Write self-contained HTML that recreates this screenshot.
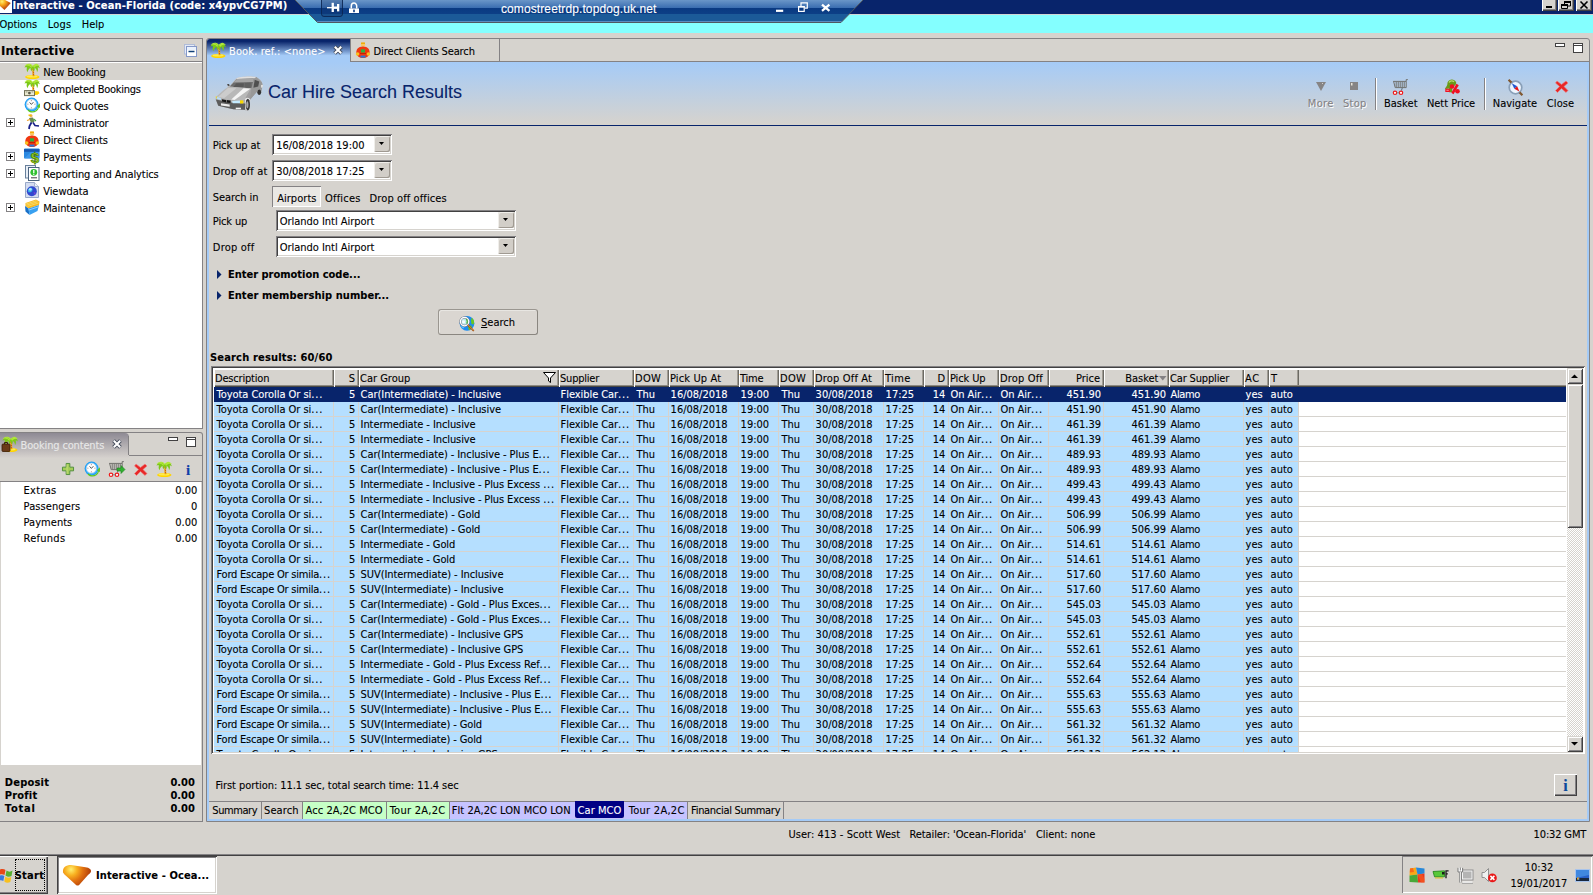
<!DOCTYPE html>
<html><head><meta charset="utf-8"><title>Interactive - Ocean-Florida</title>
<style>
html,body{margin:0;padding:0}
body{width:1593px;height:895px;overflow:hidden;background:#d6d3ce;position:relative;font:11px/14px "DejaVu Sans Condensed","Liberation Sans",sans-serif;color:#000;-webkit-text-stroke:0.1px}
.a{position:absolute;white-space:nowrap;box-sizing:border-box}
svg.a{overflow:visible}
</style></head><body>
<div class="a" style="left:0px;top:0px;width:1593px;height:14px;background:#08246b;"></div>
<svg class="a" style="left:0px;top:0px" width="12" height="13"><defs><radialGradient id="gB" cx="2" cy="1.5" r="10" gradientUnits="userSpaceOnUse"><stop offset="0" stop-color="#fff070"/><stop offset="0.35" stop-color="#f8a818"/><stop offset="0.7" stop-color="#c85810"/><stop offset="1" stop-color="#b04008"/></radialGradient></defs><rect x="0" y="0" width="12" height="13" fill="#fff"/><path d="M0 0 H5 L10.8 3 L4.5 9.9 L0 6z" fill="url(#gB)"/></svg>
<div class="a" style="left:12.5px;top:-1.5px;line-height:14px;height:14px;font-weight:bold;letter-spacing:0.138px;color:#fff;">Interactive - Ocean-Florida (code: x4ypvCG7PM)</div>
<div class="a" style="left:1542px;top:-2px;width:15px;height:13px;background:#d6d3ce;box-shadow:inset 1px 1px 0 #fff,inset -1px -1px 0 #424142,inset -2px -2px 0 #848284;"></div>
<div class="a" style="left:1558px;top:-2px;width:16px;height:13px;background:#d6d3ce;box-shadow:inset 1px 1px 0 #fff,inset -1px -1px 0 #424142,inset -2px -2px 0 #848284;"></div>
<div class="a" style="left:1576px;top:-2px;width:16px;height:13px;background:#d6d3ce;box-shadow:inset 1px 1px 0 #fff,inset -1px -1px 0 #424142,inset -2px -2px 0 #848284;"></div>
<svg class="a" style="left:1546px;top:6px" width="7" height="3"><rect x="0" y="0" width="6" height="2" fill="#000"/></svg><svg class="a" style="left:1561px;top:0px" width="10" height="10"><path d="M3.5 1.5h6v4.5h-6z M0.5 4.5h6v4h-6z" fill="none" stroke="#000" stroke-width="1"/><path d="M3 1h7v2h-7z M0 4h7v2h-7z" fill="#000"/><rect x="1" y="6" width="5" height="2" fill="#d6d3ce"/></svg><svg class="a" style="left:1580px;top:1px" width="9" height="8"><path d="M0.5 0.5 L7.5 7.5 M7.5 0.5 L0.5 7.5" stroke="#000" stroke-width="1.6"/></svg>
<div class="a" style="left:0px;top:14px;width:1593px;height:19px;background:#84ffff;"></div>
<div class="a" style="left:0px;top:14px;width:1593px;height:1px;background:#d0d8d4;"></div>
<div class="a" style="left:-0.5px;top:18px;line-height:14px;height:14px;letter-spacing:-0.098px;">Options</div>
<div class="a" style="left:47.8px;top:18px;line-height:14px;height:14px;letter-spacing:0.147px;">Logs</div>
<div class="a" style="left:81.7px;top:18px;line-height:14px;height:14px;letter-spacing:0.030px;">Help</div>
<svg class="a" style="left:295px;top:0px" width="568" height="23"><defs><linearGradient id="gR" x1="0" y1="0" x2="0" y2="22" gradientUnits="userSpaceOnUse"><stop offset="0" stop-color="#6a96c8"/><stop offset="0.36" stop-color="#3a6db0"/><stop offset="0.37" stop-color="#0a3a82"/><stop offset="0.63" stop-color="#0c3f86"/><stop offset="0.65" stop-color="#1b5a98"/><stop offset="0.95" stop-color="#1b5a98"/><stop offset="0.96" stop-color="#5a8ac0"/><stop offset="1" stop-color="#5a8ac0"/></linearGradient></defs><path d="M0 0 H568 L546 22.5 H22.5z" fill="url(#gR)"/><path d="M0 0 L22.5 22.5 H546 L568 0" fill="none" stroke="#505860" stroke-width="1"/><path d="M26.5 -1 V14 a2.5 2.5 0 0 0 2.5 2.5 H45 a2.5 2.5 0 0 0 2.5 -2.5 V-1z" fill="#102c60" fill-opacity="0.25" stroke="#0a2450" stroke-opacity="0.85"/><path d="M32 7.7h5.5" stroke="#fff" stroke-width="1.3"/><rect x="36.6" y="2.8" width="2.3" height="9.2" fill="#fff"/><rect x="38" y="6.5" width="4.5" height="2.4" fill="#fff"/><rect x="42" y="4" width="2.3" height="7.4" fill="#fff"/><path d="M56.3 8.5 V6 a2.7 2.9 0 0 1 5.4 0 V8.5" fill="none" stroke="#fff" stroke-width="1.5"/><rect x="54" y="8.4" width="10" height="4.6" fill="#fff"/><rect x="58.2" y="9.6" width="1.6" height="2.6" fill="#0a3a82"/><rect x="481" y="9.7" width="7.2" height="2.2" fill="#fff"/><path d="M506 7 V2.8 h6.3 v5.4 h-2.5" fill="none" stroke="#fff" stroke-width="1.2"/><rect x="503.6" y="6.6" width="5.6" height="4.8" fill="none" stroke="#fff" stroke-width="1.2"/><path d="M503 6.8h6.8" stroke="#fff" stroke-width="1.4"/><path d="M527 4.6 L534.4 10.8 M534.4 4.6 L527 10.8" stroke="#fff" stroke-width="2.3"/></svg>
<div class="a" style="left:501px;top:2px;line-height:14px;height:14px;color:#fff;font-family:Liberation Sans,sans-serif;font-size:12px;letter-spacing:0.1px;">comostreetrdp.topdog.uk.net</div>
<div class="a" style="left:0px;top:38px;width:203px;height:391px;border:1px solid #848284;border-left:none;"></div>
<div class="a" style="left:0px;top:61px;width:202px;height:1px;background:#848284;"></div>
<div class="a" style="left:0px;top:62px;width:202px;height:366px;background:#fff;"></div>
<div class="a" style="left:1.1px;top:43px;line-height:16px;height:16px;font-weight:bold;font-size:13px;letter-spacing:0.104px;">Interactive</div>
<svg class="a" style="left:184px;top:44px" width="13" height="13"><rect x="0.5" y="0.5" width="10" height="9.5" fill="#e4eaf6" stroke="#b0bcd8"/><rect x="2.5" y="2.5" width="10" height="10" fill="#fff" stroke="#8498c8"/><rect x="3" y="3" width="9" height="3" fill="#eaf2fc"/><path d="M4.5 7.5h6" stroke="#104078" stroke-width="1.5"/></svg>
<div class="a" style="left:0px;top:63px;width:202px;height:17px;background:#d6d3ce;"></div>
<div class="a" style="left:43.2px;top:66px;line-height:14px;height:14px;letter-spacing:-0.197px;">New Booking</div>
<svg class="a" style="left:24px;top:63px" width="16" height="16"><ellipse cx="8.3" cy="14" rx="7.2" ry="2.1" fill="#ffd400"/><ellipse cx="8" cy="13.4" rx="5.5" ry="1.1" fill="#ffea50"/><path d="M7.8 4 C8.6 7 8.1 10 8.6 13.2 L10.4 13.2 C10 10 10.4 7 9.6 4z" fill="#f0a818"/><path d="M8.6 6.5l1 .8 M8.8 9l1.1 .9 M8.9 11.3l1.2 .8" stroke="#b84810" stroke-width="0.9"/><path d="M8.5 3.6 C6 0.4 3 0.4 0.4 4.6 C1.5 4 2.5 4 3 4.5 C2.4 6 2.5 7.6 3.6 9.2 C4 7 5 5.6 6.6 5 C6.4 6.6 6.9 7.6 7.5 8.2 L8.6 5 L9.6 8.6 C10.6 7.6 10.9 6.6 10.6 5 C12.1 5.6 13 7 13 9.2 C14.1 7.6 14.3 6 13.6 4.5 C14.6 4.3 15.4 4.8 16 5.6 C15 1.8 12 0 8.5 3.6z" fill="#7cc818"/><path d="M8.5 3.4 C7 1 4.5 0.6 2.5 2 C4.8 1.8 6.5 2.8 7.6 4.4 M9 3.4 C10.5 1.2 12.5 0.8 14.2 2.2 C12.2 2 10.8 3 9.8 4.4" fill="none" stroke="#b0e838" stroke-width="1.1"/></svg>
<div class="a" style="left:43.2px;top:83px;line-height:14px;height:14px;letter-spacing:-0.268px;">Completed Bookings</div>
<svg class="a" style="left:24px;top:80px" width="16" height="16"><g transform="translate(0,-1)"><ellipse cx="8.3" cy="14" rx="7.2" ry="2.1" fill="#ffd400"/><ellipse cx="8" cy="13.4" rx="5.5" ry="1.1" fill="#ffea50"/><path d="M7.8 4 C8.6 7 8.1 10 8.6 13.2 L10.4 13.2 C10 10 10.4 7 9.6 4z" fill="#f0a818"/><path d="M8.6 6.5l1 .8 M8.8 9l1.1 .9 M8.9 11.3l1.2 .8" stroke="#b84810" stroke-width="0.9"/><path d="M8.5 3.6 C6 0.4 3 0.4 0.4 4.6 C1.5 4 2.5 4 3 4.5 C2.4 6 2.5 7.6 3.6 9.2 C4 7 5 5.6 6.6 5 C6.4 6.6 6.9 7.6 7.5 8.2 L8.6 5 L9.6 8.6 C10.6 7.6 10.9 6.6 10.6 5 C12.1 5.6 13 7 13 9.2 C14.1 7.6 14.3 6 13.6 4.5 C14.6 4.3 15.4 4.8 16 5.6 C15 1.8 12 0 8.5 3.6z" fill="#7cc818"/><path d="M8.5 3.4 C7 1 4.5 0.6 2.5 2 C4.8 1.8 6.5 2.8 7.6 4.4 M9 3.4 C10.5 1.2 12.5 0.8 14.2 2.2 C12.2 2 10.8 3 9.8 4.4" fill="none" stroke="#b0e838" stroke-width="1.1"/></g><path d="M10.5 11.5h4.5v1.6h-1v1.5h-4z" fill="#ffd000"/><rect x="0.5" y="10.6" width="10" height="5" fill="#e8e8d0" stroke="#707058" stroke-width="1"/><circle cx="5.4" cy="13.1" r="1.4" fill="#585848"/><path d="M1.8 12h1.6 M7.6 12h1.6" stroke="#888870" stroke-width="0.8"/></svg>
<div class="a" style="left:43.2px;top:100px;line-height:14px;height:14px;letter-spacing:-0.073px;">Quick Quotes</div>
<svg class="a" style="left:24px;top:97px" width="16" height="16"><circle cx="7.6" cy="7.6" r="7" fill="#1c9cf4"/><circle cx="7.6" cy="7.6" r="6" fill="#48b8ff"/><path d="M4.5 12.2 C7.5 15.8 12.5 14.6 14.3 10 L12.8 9.4 L15.9 6.2 L16 11 L15 10.4 C13.5 15.5 7.5 17.5 3.6 13.4z" fill="#5cc81c"/><circle cx="7.4" cy="7.2" r="4.9" fill="#fff" stroke="#c8d0e0" stroke-width="0.5"/><path d="M7.4 3.2v1 M7.4 10.3v1 M3.4 7.2h1 M10.4 7.2h1" stroke="#806050" stroke-width="0.7"/><path d="M5.6 5.4 L7.4 7.4 L9.4 5.2" fill="none" stroke="#404040" stroke-width="0.9"/></svg>
<div class="a" style="left:43.2px;top:117px;line-height:14px;height:14px;letter-spacing:-0.164px;">Administrator</div>
<svg class="a" style="left:24px;top:114px" width="16" height="16"><circle cx="7" cy="1.8" r="1.6" fill="#f0b060"/><path d="M4.5 1.2h3" stroke="#f0c000" stroke-width="1.4"/><path d="M5 4 L9 3.5 L10.5 8 L7 9z" fill="#6a8a50"/><path d="M6 5.5 L3 6.5" stroke="#f0a020" stroke-width="1.2"/><path d="M9.5 5 L12 7" stroke="#40a040" stroke-width="1.2"/><path d="M7.5 8.5 L5.5 12 L5 15" fill="none" stroke="#182088" stroke-width="1.8"/><path d="M9 8.5 L11 11.5 L15 12" fill="none" stroke="#182088" stroke-width="1.6"/></svg>
<svg class="a" style="left:6px;top:118px" width="9" height="9"><rect x="0.5" y="0.5" width="8" height="8" fill="#fff" stroke="#848284"/><path d="M2 4.5h5M4.5 2v5" stroke="#000" stroke-width="1"/></svg>
<div class="a" style="left:43.2px;top:134px;line-height:14px;height:14px;letter-spacing:-0.147px;">Direct Clients</div>
<svg class="a" style="left:24px;top:131px" width="16" height="16"><circle cx="8" cy="2.6" r="2.2" fill="#f8c860"/><path d="M6 1.2h4" stroke="#f0a800" stroke-width="1.4"/><path d="M8 4.6 C13 4.6 15 8 14.6 11 C14.3 14 11.5 16 8 16 C4.5 16 1.7 14 1.4 11 C1 8 3 4.6 8 4.6z" fill="#f03810"/><circle cx="2.6" cy="12" r="1.8" fill="#f8c020"/><circle cx="13.4" cy="12" r="1.8" fill="#f8c020"/><rect x="6" y="7.3" width="4" height="3.2" fill="#30b040"/><rect x="5.5" y="13.6" width="5" height="2" fill="#2878d8"/><path d="M5 11.5h6" stroke="#c82000" stroke-width="1"/></svg>
<div class="a" style="left:43.2px;top:151px;line-height:14px;height:14px;letter-spacing:0.008px;">Payments</div>
<svg class="a" style="left:24px;top:148px" width="16" height="16"><rect x="0" y="0.5" width="15.5" height="10" rx="1" fill="#2a88e0"/><rect x="0" y="1.2" width="15.5" height="2.6" fill="#1858b0"/><path d="M0 10.5 L7 4 L15.5 4 L15.5 10.5z" fill="#4aa0f0" opacity="0.6"/><text x="11" y="14.6" font-size="15" font-weight="bold" text-anchor="middle" fill="#a0d818" stroke="#487808" stroke-width="0.7" font-family="Liberation Sans,sans-serif">$</text></svg>
<svg class="a" style="left:6px;top:152px" width="9" height="9"><rect x="0.5" y="0.5" width="8" height="8" fill="#fff" stroke="#848284"/><path d="M2 4.5h5M4.5 2v5" stroke="#000" stroke-width="1"/></svg>
<div class="a" style="left:43.2px;top:168px;line-height:14px;height:14px;letter-spacing:-0.105px;">Reporting and Analytics</div>
<svg class="a" style="left:24px;top:165px" width="16" height="16"><rect x="1.5" y="0.5" width="10" height="12.5" fill="#e8eef6" stroke="#68809c"/><rect x="4.5" y="2.5" width="10.5" height="13" fill="#fff" stroke="#4c6480"/><circle cx="9.8" cy="7.3" r="3.4" fill="#30c030"/><path d="M9.8 5v3" stroke="#fff" stroke-width="1.3"/><circle cx="9.8" cy="9.2" r="0.7" fill="#fff"/><path d="M7 12.8h6" stroke="#424142" stroke-width="1"/></svg>
<svg class="a" style="left:6px;top:169px" width="9" height="9"><rect x="0.5" y="0.5" width="8" height="8" fill="#fff" stroke="#848284"/><path d="M2 4.5h5M4.5 2v5" stroke="#000" stroke-width="1"/></svg>
<div class="a" style="left:43.2px;top:185px;line-height:14px;height:14px;letter-spacing:-0.046px;">Viewdata</div>
<svg class="a" style="left:24px;top:182px" width="16" height="16"><path d="M1.5 0.5h9l4 4v11h-13z" fill="#d4dcf0" stroke="#98a8c8"/><path d="M10.5 0.5v4h4" fill="#eef2fa" stroke="#98a8c8" stroke-width="0.8"/><circle cx="7.8" cy="9.3" r="5" fill="#3048d0"/><path d="M4 7.5 C6 4.5 9 5.5 8.5 8 C8 10.5 5.5 10.5 4.2 10z" fill="#38b8e8"/><path d="M9.5 10.5 C11 9.8 12.3 10.8 11 13z" fill="#8040d0"/><circle cx="6.3" cy="7.3" r="1.4" fill="#c8f0ff" opacity="0.8"/></svg>
<div class="a" style="left:43.2px;top:202px;line-height:14px;height:14px;letter-spacing:-0.132px;">Maintenance</div>
<svg class="a" style="left:24px;top:199px" width="16" height="16"><path d="M1.5 4 L12 0.5 L15.5 2.5 L15 6 L4.5 9.5 L1.5 7z" fill="#f8b820"/><path d="M2 5 L12.5 1.6 M2.5 6.2 L13.5 2.8 M3.5 7.4 L14.5 4" stroke="#f8e070" stroke-width="0.8"/><path d="M1 7 L4.5 9.5 L5.5 16 L1.5 12.5z" fill="#1870c8"/><path d="M4.5 9.5 L15 6 L13.5 12 L5.5 16z" fill="#38a0f0"/><path d="M5 11 L14.5 7.8" stroke="#90d0ff" stroke-width="1"/></svg>
<svg class="a" style="left:6px;top:203px" width="9" height="9"><rect x="0.5" y="0.5" width="8" height="8" fill="#fff" stroke="#848284"/><path d="M2 4.5h5M4.5 2v5" stroke="#000" stroke-width="1"/></svg>
<div class="a" style="left:0px;top:432px;width:203px;height:390px;border:1px solid #848284;border-left:none;border-top-right-radius:3px;"></div>
<div class="a" style="left:0px;top:433px;width:129px;height:25px;background:linear-gradient(#8e8a94,#d6d2ce);border-top-right-radius:4px;"></div>
<div class="a" style="left:128px;top:436px;width:1px;height:19px;background:#848284;"></div>
<div class="a" style="left:129px;top:455px;width:73px;height:1px;background:#848284;"></div>
<svg class="a" style="left:2px;top:436px" width="16" height="16"><ellipse cx="8.3" cy="14" rx="7.2" ry="2.1" fill="#ffd400"/><ellipse cx="8" cy="13.4" rx="5.5" ry="1.1" fill="#ffea50"/><path d="M7.8 4 C8.6 7 8.1 10 8.6 13.2 L10.4 13.2 C10 10 10.4 7 9.6 4z" fill="#f0a818"/><path d="M8.6 6.5l1 .8 M8.8 9l1.1 .9 M8.9 11.3l1.2 .8" stroke="#b84810" stroke-width="0.9"/><path d="M8.5 3.6 C6 0.4 3 0.4 0.4 4.6 C1.5 4 2.5 4 3 4.5 C2.4 6 2.5 7.6 3.6 9.2 C4 7 5 5.6 6.6 5 C6.4 6.6 6.9 7.6 7.5 8.2 L8.6 5 L9.6 8.6 C10.6 7.6 10.9 6.6 10.6 5 C12.1 5.6 13 7 13 9.2 C14.1 7.6 14.3 6 13.6 4.5 C14.6 4.3 15.4 4.8 16 5.6 C15 1.8 12 0 8.5 3.6z" fill="#7cc818"/><path d="M8.5 3.4 C7 1 4.5 0.6 2.5 2 C4.8 1.8 6.5 2.8 7.6 4.4 M9 3.4 C10.5 1.2 12.5 0.8 14.2 2.2 C12.2 2 10.8 3 9.8 4.4" fill="none" stroke="#b0e838" stroke-width="1.1"/><rect x="0" y="8" width="8" height="7.5" rx="1" fill="#6a3a18" stroke="#3a1c08" stroke-width="0.8"/><path d="M2.5 8V6.5h3V8" fill="none" stroke="#3a1c08" stroke-width="1"/></svg>
<div class="a" style="left:20.6px;top:438.5px;line-height:14px;height:14px;letter-spacing:-0.158px;color:#e8e8e8;">Booking contents</div>
<svg class="a" style="left:112px;top:439px" width="10" height="10"><path d="M1.6 1.6 L8.4 8.4 M8.4 1.6 L1.6 8.4" stroke="#404858" stroke-width="3.8"/><path d="M1.8 1.8 L8.2 8.2 M8.2 1.8 L1.8 8.2" stroke="#fff" stroke-width="2.1"/></svg>
<svg class="a" style="left:168px;top:437px" width="11" height="5"><rect x="0.5" y="0.5" width="9" height="3" fill="#fff" stroke="#424142"/></svg><svg class="a" style="left:186px;top:437px" width="11" height="11"><rect x="0.5" y="0.5" width="9" height="9" fill="#fff" stroke="#424142"/><path d="M0.5 2.5h9" stroke="#424142"/></svg>
<div class="a" style="left:129px;top:456px;width:73px;height:2px;background:#d6d3ce;"></div>
<div class="a" style="left:0px;top:481px;width:202px;height:1px;background:#848284;"></div>
<svg class="a" style="left:62px;top:463px" width="12" height="12" viewBox="0 0 13 13"><path d="M4.5 0.5h4v4h4v4h-4v4h-4v-4h-4v-4h4z" fill="#a4cc58" stroke="#4c8c38" stroke-width="1"/><path d="M5.5 1.5v10" stroke="#c8e080" stroke-width="1"/></svg><svg class="a" style="left:84px;top:461px" width="16" height="16"><circle cx="7.6" cy="7.6" r="7" fill="#1c9cf4"/><circle cx="7.6" cy="7.6" r="6" fill="#48b8ff"/><path d="M4.5 12.2 C7.5 15.8 12.5 14.6 14.3 10 L12.8 9.4 L15.9 6.2 L16 11 L15 10.4 C13.5 15.5 7.5 17.5 3.6 13.4z" fill="#5cc81c"/><circle cx="7.4" cy="7.2" r="4.9" fill="#fff" stroke="#c8d0e0" stroke-width="0.5"/><path d="M7.4 3.2v1 M7.4 10.3v1 M3.4 7.2h1 M10.4 7.2h1" stroke="#806050" stroke-width="0.7"/><path d="M5.6 5.4 L7.4 7.4 L9.4 5.2" fill="none" stroke="#404040" stroke-width="0.9"/></svg><svg class="a" style="left:108px;top:461px" width="17" height="16"><path d="M1.2 2.4h13 M14.2 2.4 V8.6 H3.2 L1.6 2.4 M4.2 3v5 M6.2 3v5 M8.2 3v5 M10.2 3v5 M12.2 3v5 M14.2 2.4 V0.6 h1.6" fill="none" stroke="#70706c" stroke-width="1"/><path d="M10.4 8.6 L9.4 11.6" stroke="#607078"/><circle cx="3" cy="13.8" r="1.7" fill="#fff" stroke="#f01818" stroke-width="1.2"/><circle cx="9" cy="13.8" r="1.7" fill="#fff" stroke="#f01818" stroke-width="1.2"/><path d="M4.7 13.8h2.6" stroke="#848284"/><path d="M9 7h4V4.5l4 4 -4 4V10H9z" fill="#30b030" stroke="#208020" stroke-width="0.6"/></svg><svg class="a" style="left:134px;top:463px" width="14" height="13"><path d="M2 1 L6.5 4.5 L11 1 L13 3 L9 6.5 L13 10.5 L11 12.5 L6.5 8.5 L2.5 12.5 L0.5 10.5 L4.5 6.5 L0.5 3z" fill="#e82828" stroke="#f08080" stroke-width="0.6"/></svg><svg class="a" style="left:156px;top:461px" width="16" height="16"><ellipse cx="8.3" cy="14" rx="7.2" ry="2.1" fill="#ffd400"/><ellipse cx="8" cy="13.4" rx="5.5" ry="1.1" fill="#ffea50"/><path d="M7.8 4 C8.6 7 8.1 10 8.6 13.2 L10.4 13.2 C10 10 10.4 7 9.6 4z" fill="#f0a818"/><path d="M8.6 6.5l1 .8 M8.8 9l1.1 .9 M8.9 11.3l1.2 .8" stroke="#b84810" stroke-width="0.9"/><path d="M8.5 3.6 C6 0.4 3 0.4 0.4 4.6 C1.5 4 2.5 4 3 4.5 C2.4 6 2.5 7.6 3.6 9.2 C4 7 5 5.6 6.6 5 C6.4 6.6 6.9 7.6 7.5 8.2 L8.6 5 L9.6 8.6 C10.6 7.6 10.9 6.6 10.6 5 C12.1 5.6 13 7 13 9.2 C14.1 7.6 14.3 6 13.6 4.5 C14.6 4.3 15.4 4.8 16 5.6 C15 1.8 12 0 8.5 3.6z" fill="#7cc818"/><path d="M8.5 3.4 C7 1 4.5 0.6 2.5 2 C4.8 1.8 6.5 2.8 7.6 4.4 M9 3.4 C10.5 1.2 12.5 0.8 14.2 2.2 C12.2 2 10.8 3 9.8 4.4" fill="none" stroke="#b0e838" stroke-width="1.1"/></svg><div class="a" style="left:184px;top:460px;width:8px;line-height:20px;font-family:'Liberation Serif',serif;font-weight:bold;font-size:15px;color:#1040a8;text-align:center">i</div>
<div class="a" style="left:1px;top:482px;width:200px;height:283px;background:#fff;"></div>
<div class="a" style="left:23.6px;top:484px;line-height:14px;height:14px;letter-spacing:0.270px;">Extras</div>
<div class="a" style="left:100px;top:484px;line-height:14px;height:14px;width:97.3px;text-align:right;">0.00</div>
<div class="a" style="left:23.6px;top:500px;line-height:14px;height:14px;letter-spacing:0.089px;">Passengers</div>
<div class="a" style="left:100px;top:500px;line-height:14px;height:14px;width:97.3px;text-align:right;">0</div>
<div class="a" style="left:23.6px;top:516px;line-height:14px;height:14px;letter-spacing:0.033px;">Payments</div>
<div class="a" style="left:100px;top:516px;line-height:14px;height:14px;width:97.3px;text-align:right;">0.00</div>
<div class="a" style="left:23.6px;top:532px;line-height:14px;height:14px;letter-spacing:0.250px;">Refunds</div>
<div class="a" style="left:100px;top:532px;line-height:14px;height:14px;width:97.3px;text-align:right;">0.00</div>
<div class="a" style="left:4.8px;top:776px;line-height:14px;height:14px;font-weight:bold;letter-spacing:0.222px;">Deposit</div>
<div class="a" style="left:100px;top:776px;line-height:14px;height:14px;width:94.8px;text-align:right;font-weight:bold;">0.00</div>
<div class="a" style="left:4.8px;top:789px;line-height:14px;height:14px;font-weight:bold;letter-spacing:0.197px;">Profit</div>
<div class="a" style="left:100px;top:789px;line-height:14px;height:14px;width:94.8px;text-align:right;font-weight:bold;">0.00</div>
<div class="a" style="left:4.8px;top:802px;line-height:14px;height:14px;font-weight:bold;letter-spacing:0.802px;">Total</div>
<div class="a" style="left:100px;top:802px;line-height:14px;height:14px;width:94.8px;text-align:right;font-weight:bold;">0.00</div>
<div class="a" style="left:206px;top:38px;width:1384px;height:784px;border:1px solid #848284;border-radius:3px 3px 0 0;"></div>
<div class="a" style="left:207px;top:61px;width:1382px;height:1px;background:#848284;"></div>
<div class="a" style="left:207px;top:62px;width:1382px;height:759px;background:#a5cbf7;"></div>
<div class="a" style="left:209px;top:62px;width:1378px;height:757px;background:#d6d3ce;"></div>
<div class="a" style="left:209px;top:62px;width:1378px;height:62px;background:linear-gradient(#a5cbf7,#d6d3ce);"></div>
<div class="a" style="left:209px;top:125px;width:1378px;height:1px;background:#08246b;"></div>
<div class="a" style="left:207px;top:39px;width:143px;height:23px;background:linear-gradient(#08246b 0,#08246b 10%,#a5cbf7 72%,#a5cbf7 100%);border-radius:3px 0 0 0;"></div>
<svg class="a" style="left:210px;top:42px" width="16" height="16"><ellipse cx="8.3" cy="14" rx="7.2" ry="2.1" fill="#ffd400"/><ellipse cx="8" cy="13.4" rx="5.5" ry="1.1" fill="#ffea50"/><path d="M7.8 4 C8.6 7 8.1 10 8.6 13.2 L10.4 13.2 C10 10 10.4 7 9.6 4z" fill="#f0a818"/><path d="M8.6 6.5l1 .8 M8.8 9l1.1 .9 M8.9 11.3l1.2 .8" stroke="#b84810" stroke-width="0.9"/><path d="M8.5 3.6 C6 0.4 3 0.4 0.4 4.6 C1.5 4 2.5 4 3 4.5 C2.4 6 2.5 7.6 3.6 9.2 C4 7 5 5.6 6.6 5 C6.4 6.6 6.9 7.6 7.5 8.2 L8.6 5 L9.6 8.6 C10.6 7.6 10.9 6.6 10.6 5 C12.1 5.6 13 7 13 9.2 C14.1 7.6 14.3 6 13.6 4.5 C14.6 4.3 15.4 4.8 16 5.6 C15 1.8 12 0 8.5 3.6z" fill="#7cc818"/><path d="M8.5 3.4 C7 1 4.5 0.6 2.5 2 C4.8 1.8 6.5 2.8 7.6 4.4 M9 3.4 C10.5 1.2 12.5 0.8 14.2 2.2 C12.2 2 10.8 3 9.8 4.4" fill="none" stroke="#b0e838" stroke-width="1.1"/></svg>
<div class="a" style="left:229px;top:44.5px;line-height:14px;height:14px;letter-spacing:0.127px;color:#fff;">Book. ref.: &lt;none&gt;</div>
<svg class="a" style="left:333px;top:45px" width="10" height="10"><path d="M1.6 1.6 L8.4 8.4 M8.4 1.6 L1.6 8.4" stroke="#404858" stroke-width="3.8"/><path d="M1.8 1.8 L8.2 8.2 M8.2 1.8 L1.8 8.2" stroke="#fff" stroke-width="2.1"/></svg>
<div class="a" style="left:350px;top:39px;width:1px;height:23px;background:#848284;"></div>
<div class="a" style="left:350px;top:39px;width:150px;height:23px;border-right:1px solid #848284;"></div>
<svg class="a" style="left:355px;top:42px" width="16" height="16"><circle cx="8" cy="2.6" r="2.2" fill="#f8c860"/><path d="M6 1.2h4" stroke="#f0a800" stroke-width="1.4"/><path d="M8 4.6 C13 4.6 15 8 14.6 11 C14.3 14 11.5 16 8 16 C4.5 16 1.7 14 1.4 11 C1 8 3 4.6 8 4.6z" fill="#f03810"/><circle cx="2.6" cy="12" r="1.8" fill="#f8c020"/><circle cx="13.4" cy="12" r="1.8" fill="#f8c020"/><rect x="6" y="7.3" width="4" height="3.2" fill="#30b040"/><rect x="5.5" y="13.6" width="5" height="2" fill="#2878d8"/><path d="M5 11.5h6" stroke="#c82000" stroke-width="1"/></svg>
<div class="a" style="left:373.6px;top:44.5px;line-height:14px;height:14px;letter-spacing:-0.118px;">Direct Clients Search</div>
<svg class="a" style="left:1555px;top:43px" width="11" height="5"><rect x="0.5" y="0.5" width="9" height="3" fill="#fff" stroke="#424142"/></svg><svg class="a" style="left:1573px;top:43px" width="11" height="11"><rect x="0.5" y="0.5" width="9" height="9" fill="#fff" stroke="#424142"/><path d="M0.5 2.5h9" stroke="#424142"/></svg>
<svg class="a" style="left:208px;top:64px" width="64" height="54" viewBox="0 0 1061 895"><defs><linearGradient id="gC" x1="0" y1="0" x2="1" y2="1"><stop offset="0" stop-color="#d0d0d0"/><stop offset="1" stop-color="#848284"/></linearGradient><filter id="bl"><feGaussianBlur stdDeviation="6"/></filter></defs><g filter="url(#bl)"><path d="M470,235 C520,210 700,195 800,215 C850,240 890,280 895,310 L905,350 L885,375 L880,480 L830,505 L810,460 L700,590 L690,700 L650,775 L600,760 L420,750 L170,690 L130,600 L125,580 L140,540 L250,440 L330,380 L320,340 L345,335 L360,365 Z" fill="url(#gC)"/><path d="M760,240 L800,215 L895,310 L905,350 L880,480 L830,505 L810,460 L700,590 L720,400 Z" fill="#989898"/><path d="M470,235 C520,210 700,195 800,215 L760,240 L480,250 Z" fill="#e0e0e0"/><path d="M360,372 L480,250 L760,240 L720,400 L600,392 Z" fill="#6c6c6c"/><path d="M480,250 L760,240 L748,300 L425,308 Z" fill="#a6a6a6"/><path d="M470,320 L595,318 L590,392 L420,380 Z" fill="#585858"/><path d="M610,315 L710,312 L705,398 L605,392 Z" fill="#606060"/><path d="M775,262 L850,292 L832,372 L752,392 Z" fill="#505050"/><path d="M360,375 L600,395 L720,405 L690,440 L600,600 L400,600 L230,580 L140,545 Z" fill="#b8b8b8"/><path d="M330,398 L470,402 L270,565 L165,548 Z" fill="#cccccc"/><path d="M590,402 L700,410 L440,595 L385,588 Z" fill="#f4f4f4"/><path d="M140,545 L230,580 L400,600 L600,600 L612,655 L400,642 L230,612 L130,590 Z" fill="#b4b4b4"/><path d="M130,590 L230,610 L400,642 L612,655 L620,760 L420,750 L170,690 Z" fill="#5c5c5c"/><ellipse cx="850" cy="468" rx="30" ry="44" fill="#303030"/><path d="M610,580 C650,540 700,560 700,600 L690,700 L650,775 L620,760 Z" fill="#e8e8e8"/><ellipse cx="660" cy="672" rx="36" ry="98" fill="#383838"/><ellipse cx="652" cy="675" rx="18" ry="58" fill="#a8a8a8"/><path d="M228,585 L300,597 L300,637 L235,622 Z M310,598 L378,606 L372,647 L312,638 Z" fill="#161616"/><path d="M400,612 L530,606 L530,652 L410,652 Z" fill="#c4eaff"/><rect x="530" y="603" width="56" height="52" fill="#f8d800"/><path d="M140,540 L215,566 L215,596 L142,576 Z" fill="#b4dcf8"/><path d="M128,533 L150,540 L150,572 L130,566 Z" fill="#e8d040"/><path d="M215,650 L360,672 L360,710 L215,686 Z" fill="#ececec"/><rect x="460" y="724" width="86" height="26" fill="#f4f4f4"/><path d="M315,335 L350,330 L357,366 L330,362 Z" fill="#424142"/><path d="M880,350 L912,345 L906,386 L880,392 Z" fill="#e4e4e4"/></g></svg>
<div class="a" style="left:268px;top:81px;line-height:22px;height:22px;color:#08246b;font-family:Liberation Sans,sans-serif;font-size:18px;">Car Hire Search Results</div>
<svg class="a" style="left:1316px;top:82px" width="10" height="9"><path d="M0 0h10l-5 9z" fill="#868484"/><rect x="6" y="1" width="1" height="1" fill="#d8d4d0"/></svg><svg class="a" style="left:1350px;top:82px" width="8" height="8"><rect x="0" y="0" width="8" height="8" fill="#868484"/><rect x="1" y="1" width="1.5" height="2.5" fill="#e8e4d8"/></svg><div class="a" style="left:1375px;top:78px;width:2px;height:32px;border-left:1px solid #848284;border-right:1px solid #fff"></div><svg class="a" style="left:1392px;top:79px" width="17" height="16"><path d="M1.2 2.4h13 M14.2 2.4 V8.6 H3.2 L1.6 2.4 M4.2 3v5 M6.2 3v5 M8.2 3v5 M10.2 3v5 M12.2 3v5 M14.2 2.4 V0.6 h1.6" fill="none" stroke="#70706c" stroke-width="1"/><path d="M10.4 8.6 L9.4 11.6" stroke="#607078"/><circle cx="3" cy="13.8" r="1.7" fill="#fff" stroke="#f01818" stroke-width="1.2"/><circle cx="9" cy="13.8" r="1.7" fill="#fff" stroke="#f01818" stroke-width="1.2"/><path d="M4.7 13.8h2.6" stroke="#848284"/></svg><svg class="a" style="left:1444px;top:79px" width="17" height="16"><path d="M3.5 3.5 C5 -0.5 10.5 -0.5 12 3 C12.8 5 11 7 8.5 8 L8 13 L5.5 13.5 L5 9.5 L1 10 C1.5 8 3.5 7.5 3.5 3.5z" fill="#6a9a18"/><path d="M5 3.5 C6 1.5 9 1.3 10 3" fill="none" stroke="#b8d870" stroke-width="1.2"/><circle cx="8" cy="7.5" r="2.3" fill="#f01020"/><circle cx="13.5" cy="12.3" r="2.3" fill="#f01020"/><path d="M13.6 5.5 L8.4 14.5" stroke="#f01020" stroke-width="2.6"/><rect x="1.3" y="9.7" width="4.6" height="3.3" fill="#f01020"/><path d="M2.4 11.3h2.4" stroke="#f8a0a0" stroke-width="0.9"/></svg><div class="a" style="left:1484px;top:78px;width:2px;height:32px;border-left:1px solid #848284;border-right:1px solid #fff"></div><svg class="a" style="left:1507px;top:79px" width="17" height="17"><circle cx="8.5" cy="8.5" r="6.3" fill="#eef6ff" stroke="#8aa0b8" stroke-width="1.7"/><path d="M4.8 4.2 L10.2 7.3 L7.3 9.7z" fill="#2058d0"/><path d="M12.4 12.6 L7.3 9.7 L10.2 7.3z" fill="#e81818"/><path d="M1.6 0.8 L4.4 3.6 M15.4 16.2 L12.6 13.4" stroke="#805830" stroke-width="2.2"/></svg><svg class="a" style="left:1555px;top:80px" width="14" height="13"><path d="M2 1 L6.5 4.5 L11 1 L13 3 L9 6.5 L13 10.5 L11 12.5 L6.5 8.5 L2.5 12.5 L0.5 10.5 L4.5 6.5 L0.5 3z" fill="#e82828" stroke="#f08080" stroke-width="0.6"/></svg>
<div class="a" style="left:1307.8px;top:97px;line-height:14px;height:14px;letter-spacing:0.346px;color:#848284;text-shadow:1px 1px 0 #fff;">More</div>
<div class="a" style="left:1343px;top:97px;line-height:14px;height:14px;letter-spacing:0.300px;color:#848284;text-shadow:1px 1px 0 #fff;">Stop</div>
<div class="a" style="left:1383.9px;top:97px;line-height:14px;height:14px;letter-spacing:0.062px;">Basket</div>
<div class="a" style="left:1426.9px;top:97px;line-height:14px;height:14px;letter-spacing:-0.022px;">Nett Price</div>
<div class="a" style="left:1492.8px;top:97px;line-height:14px;height:14px;letter-spacing:0.001px;">Navigate</div>
<div class="a" style="left:1546.8px;top:97px;line-height:14px;height:14px;letter-spacing:0.086px;">Close</div>
<div class="a" style="left:212.8px;top:139px;line-height:14px;height:14px;letter-spacing:-0.084px;">Pick up at</div>
<div class="a" style="left:212.8px;top:165px;line-height:14px;height:14px;letter-spacing:0.155px;">Drop off at</div>
<div class="a" style="left:212.8px;top:191px;line-height:14px;height:14px;letter-spacing:-0.051px;">Search in</div>
<div class="a" style="left:212.8px;top:215px;line-height:14px;height:14px;letter-spacing:-0.123px;">Pick up</div>
<div class="a" style="left:212.8px;top:241px;line-height:14px;height:14px;letter-spacing:0.213px;">Drop off</div>
<div class="a" style="left:272px;top:134px;width:120px;height:21px;background:#fff;box-shadow:inset 1px 1px 0 #848284,inset -1px -1px 0 #fff,inset 2px 2px 0 #424142,inset -2px -2px 0 #d6d3ce;"></div>
<div class="a" style="left:276.2px;top:139px;line-height:14px;height:14px;letter-spacing:-0.024px;">16/08/2018 19:00</div>
<div class="a" style="left:374px;top:136px;width:16px;height:16px;background:#d2cec8;border-radius:2px;box-shadow:inset 1px 1px 0 #f0eeea,inset -1px -1px 0 #a09a92;"></div>
<svg class="a" style="left:379px;top:142px" width="5" height="3"><path d="M0 0h5l-2.5 3z" fill="#000"/></svg>
<div class="a" style="left:272px;top:160px;width:120px;height:21px;background:#fff;box-shadow:inset 1px 1px 0 #848284,inset -1px -1px 0 #fff,inset 2px 2px 0 #424142,inset -2px -2px 0 #d6d3ce;"></div>
<div class="a" style="left:276.2px;top:165px;line-height:14px;height:14px;letter-spacing:-0.024px;">30/08/2018 17:25</div>
<div class="a" style="left:374px;top:162px;width:16px;height:16px;background:#d2cec8;border-radius:2px;box-shadow:inset 1px 1px 0 #f0eeea,inset -1px -1px 0 #a09a92;"></div>
<svg class="a" style="left:379px;top:168px" width="5" height="3"><path d="M0 0h5l-2.5 3z" fill="#000"/></svg>
<div class="a" style="left:272px;top:186px;width:49px;height:21px;background:#eae8e4;box-shadow:inset 1px 1px 0 #848284,inset -1px -1px 0 #fff;"></div>
<div class="a" style="left:277.2px;top:192px;line-height:14px;height:14px;letter-spacing:0.034px;">Airports</div>
<div class="a" style="left:325px;top:192px;line-height:14px;height:14px;letter-spacing:0.191px;">Offices</div>
<div class="a" style="left:369.6px;top:192px;line-height:14px;height:14px;letter-spacing:0.103px;">Drop off offices</div>
<div class="a" style="left:276px;top:210px;width:240px;height:21px;background:#fff;box-shadow:inset 1px 1px 0 #848284,inset -1px -1px 0 #fff,inset 2px 2px 0 #424142,inset -2px -2px 0 #d6d3ce;"></div>
<div class="a" style="left:279.8px;top:215px;line-height:14px;height:14px;letter-spacing:-0.033px;">Orlando Intl Airport</div>
<div class="a" style="left:498px;top:212px;width:16px;height:16px;background:#d2cec8;border-radius:2px;box-shadow:inset 1px 1px 0 #f0eeea,inset -1px -1px 0 #a09a92;"></div>
<svg class="a" style="left:503px;top:218px" width="5" height="3"><path d="M0 0h5l-2.5 3z" fill="#000"/></svg>
<div class="a" style="left:276px;top:236px;width:240px;height:21px;background:#fff;box-shadow:inset 1px 1px 0 #848284,inset -1px -1px 0 #fff,inset 2px 2px 0 #424142,inset -2px -2px 0 #d6d3ce;"></div>
<div class="a" style="left:279.8px;top:241px;line-height:14px;height:14px;letter-spacing:-0.033px;">Orlando Intl Airport</div>
<div class="a" style="left:498px;top:238px;width:16px;height:16px;background:#d2cec8;border-radius:2px;box-shadow:inset 1px 1px 0 #f0eeea,inset -1px -1px 0 #a09a92;"></div>
<svg class="a" style="left:503px;top:244px" width="5" height="3"><path d="M0 0h5l-2.5 3z" fill="#000"/></svg>
<svg class="a" style="left:217px;top:269.5px" width="5" height="9"><path d="M0 0l4.5 4.5L0 9z" fill="#08246b"/></svg>
<div class="a" style="left:227.9px;top:268px;line-height:14px;height:14px;font-weight:bold;letter-spacing:-0.005px;">Enter promotion code...</div>
<svg class="a" style="left:217px;top:290.5px" width="5" height="9"><path d="M0 0l4.5 4.5L0 9z" fill="#08246b"/></svg>
<div class="a" style="left:227.9px;top:289px;line-height:14px;height:14px;font-weight:bold;letter-spacing:0.078px;">Enter membership number...</div>
<div class="a" style="left:438px;top:309px;width:100px;height:26px;background:#dad6d1;border-radius:3px;border:1px solid #9a9690;border-bottom-color:#8a8680;border-right-color:#8a8680;box-shadow:inset 1px 1px 0 #e8e6e2;"></div>
<svg class="a" style="left:459px;top:315px" width="17" height="17"><circle cx="8" cy="8.3" r="7.4" fill="#1c8cf0"/><path d="M12.5 2.8 C15 4 15.6 7 14.6 9.5 L12.5 9 L12 6z M9 11 L12.5 10.5 L13 13.5 L10 15.3z" fill="#68c820"/><path d="M2 5 C1 8 1.5 11.5 4 13.8 L5.5 12z" fill="#58c0ff"/><circle cx="5.6" cy="6.6" r="4.2" fill="#bfeaf0" stroke="#707888" stroke-width="2.2"/><circle cx="5.6" cy="6.6" r="4.2" fill="none" stroke="#fff" stroke-width="1.3"/><circle cx="4.6" cy="6.8" r="1.6" fill="#fff" opacity="0.85"/><path d="M7 4.2 C8.5 5 8.6 7.5 7.6 8.6" fill="none" stroke="#48b028" stroke-width="1.2"/><path d="M8.8 9.9 L14.8 16" stroke="#a05010" stroke-width="1.7"/><path d="M8.6 9.5 L14.4 15.6" stroke="#e8a060" stroke-width="0.6"/></svg>
<div class="a" style="left:481px;top:316px;line-height:14px;height:14px;"><u>S</u>earch</div>
<div class="a" style="left:210px;top:351px;line-height:14px;height:14px;font-weight:bold;letter-spacing:0.173px;">Search results: 60/60</div>
<div class="a" style="left:211px;top:366px;width:1374px;height:388px;background:#fff;box-shadow:inset 1px 1px 0 #848284,inset -1px -1px 0 #fff,inset 2px 2px 0 #424142,inset -2px 0 0 #fff,inset 0 -2px 0 #d6d3ce;"></div>
<div class="a" style="left:214px;top:368px;width:1352px;height:19px;background:#d6d3ce;box-shadow:inset 0 2px 0 #fff,inset 0 -1px 0 #484844,inset 0 -2px 0 #8c8880;"></div>
<div class="a" style="left:214px;top:368px;width:120px;height:19px;box-shadow:inset 0 2px 0 #fff,inset 1px 0 0 #fff,inset 0 -1px 0 #484844,inset 0 -2px 0 #8c8880,inset -1px 0 0 #6c6a64,inset -2px 0 0 #a09c94;"></div>
<div class="a" style="left:215px;top:372px;line-height:14px;height:14px;letter-spacing:-0.189px;">Description</div>
<div class="a" style="left:334px;top:368px;width:25px;height:19px;box-shadow:inset 0 2px 0 #fff,inset 1px 0 0 #fff,inset 0 -1px 0 #484844,inset 0 -2px 0 #8c8880,inset -1px 0 0 #6c6a64,inset -2px 0 0 #a09c94;"></div>
<div class="a" style="left:334px;top:372px;line-height:14px;height:14px;width:21px;text-align:right;">S</div>
<div class="a" style="left:359px;top:368px;width:200px;height:19px;box-shadow:inset 0 2px 0 #fff,inset 1px 0 0 #fff,inset 0 -1px 0 #484844,inset 0 -2px 0 #8c8880,inset -1px 0 0 #6c6a64,inset -2px 0 0 #a09c94;"></div>
<div class="a" style="left:360px;top:372px;line-height:14px;height:14px;letter-spacing:0.000px;">Car Group</div>
<div class="a" style="left:559px;top:368px;width:75px;height:19px;box-shadow:inset 0 2px 0 #fff,inset 1px 0 0 #fff,inset 0 -1px 0 #484844,inset 0 -2px 0 #8c8880,inset -1px 0 0 #6c6a64,inset -2px 0 0 #a09c94;"></div>
<div class="a" style="left:560px;top:372px;line-height:14px;height:14px;letter-spacing:-0.212px;">Supplier</div>
<div class="a" style="left:634px;top:368px;width:35px;height:19px;box-shadow:inset 0 2px 0 #fff,inset 1px 0 0 #fff,inset 0 -1px 0 #484844,inset 0 -2px 0 #8c8880,inset -1px 0 0 #6c6a64,inset -2px 0 0 #a09c94;"></div>
<div class="a" style="left:635px;top:372px;line-height:14px;height:14px;letter-spacing:0.266px;">DOW</div>
<div class="a" style="left:669px;top:368px;width:70px;height:19px;box-shadow:inset 0 2px 0 #fff,inset 1px 0 0 #fff,inset 0 -1px 0 #484844,inset 0 -2px 0 #8c8880,inset -1px 0 0 #6c6a64,inset -2px 0 0 #a09c94;"></div>
<div class="a" style="left:670px;top:372px;line-height:14px;height:14px;letter-spacing:0.128px;">Pick Up At</div>
<div class="a" style="left:739px;top:368px;width:40px;height:19px;box-shadow:inset 0 2px 0 #fff,inset 1px 0 0 #fff,inset 0 -1px 0 #484844,inset 0 -2px 0 #8c8880,inset -1px 0 0 #6c6a64,inset -2px 0 0 #a09c94;"></div>
<div class="a" style="left:740px;top:372px;line-height:14px;height:14px;letter-spacing:-0.222px;">Time</div>
<div class="a" style="left:779px;top:368px;width:35px;height:19px;box-shadow:inset 0 2px 0 #fff,inset 1px 0 0 #fff,inset 0 -1px 0 #484844,inset 0 -2px 0 #8c8880,inset -1px 0 0 #6c6a64,inset -2px 0 0 #a09c94;"></div>
<div class="a" style="left:780px;top:372px;line-height:14px;height:14px;letter-spacing:0.332px;">DOW</div>
<div class="a" style="left:814px;top:368px;width:70px;height:19px;box-shadow:inset 0 2px 0 #fff,inset 1px 0 0 #fff,inset 0 -1px 0 #484844,inset 0 -2px 0 #8c8880,inset -1px 0 0 #6c6a64,inset -2px 0 0 #a09c94;"></div>
<div class="a" style="left:815px;top:372px;line-height:14px;height:14px;letter-spacing:0.170px;">Drop Off At</div>
<div class="a" style="left:884px;top:368px;width:40px;height:19px;box-shadow:inset 0 2px 0 #fff,inset 1px 0 0 #fff,inset 0 -1px 0 #484844,inset 0 -2px 0 #8c8880,inset -1px 0 0 #6c6a64,inset -2px 0 0 #a09c94;"></div>
<div class="a" style="left:885px;top:372px;line-height:14px;height:14px;letter-spacing:0.353px;">Time</div>
<div class="a" style="left:924px;top:368px;width:25px;height:19px;box-shadow:inset 0 2px 0 #fff,inset 1px 0 0 #fff,inset 0 -1px 0 #484844,inset 0 -2px 0 #8c8880,inset -1px 0 0 #6c6a64,inset -2px 0 0 #a09c94;"></div>
<div class="a" style="left:924px;top:372px;line-height:14px;height:14px;width:21px;text-align:right;">D</div>
<div class="a" style="left:949px;top:368px;width:50px;height:19px;box-shadow:inset 0 2px 0 #fff,inset 1px 0 0 #fff,inset 0 -1px 0 #484844,inset 0 -2px 0 #8c8880,inset -1px 0 0 #6c6a64,inset -2px 0 0 #a09c94;"></div>
<div class="a" style="left:950px;top:372px;line-height:14px;height:14px;letter-spacing:-0.118px;">Pick Up</div>
<div class="a" style="left:999px;top:368px;width:50px;height:19px;box-shadow:inset 0 2px 0 #fff,inset 1px 0 0 #fff,inset 0 -1px 0 #484844,inset 0 -2px 0 #8c8880,inset -1px 0 0 #6c6a64,inset -2px 0 0 #a09c94;"></div>
<div class="a" style="left:1000px;top:372px;line-height:14px;height:14px;letter-spacing:0.159px;">Drop Off</div>
<div class="a" style="left:1049px;top:368px;width:55px;height:19px;box-shadow:inset 0 2px 0 #fff,inset 1px 0 0 #fff,inset 0 -1px 0 #484844,inset 0 -2px 0 #8c8880,inset -1px 0 0 #6c6a64,inset -2px 0 0 #a09c94;"></div>
<div class="a" style="left:1049px;top:372px;line-height:14px;height:14px;width:51px;text-align:right;">Price</div>
<div class="a" style="left:1104px;top:368px;width:65px;height:19px;box-shadow:inset 0 2px 0 #fff,inset 1px 0 0 #fff,inset 0 -1px 0 #484844,inset 0 -2px 0 #8c8880,inset -1px 0 0 #6c6a64,inset -2px 0 0 #a09c94;"></div>
<div class="a" style="left:1104px;top:372px;line-height:14px;height:14px;width:54.5px;text-align:right;">Basket</div>
<div class="a" style="left:1169px;top:368px;width:75px;height:19px;box-shadow:inset 0 2px 0 #fff,inset 1px 0 0 #fff,inset 0 -1px 0 #484844,inset 0 -2px 0 #8c8880,inset -1px 0 0 #6c6a64,inset -2px 0 0 #a09c94;"></div>
<div class="a" style="left:1170px;top:372px;line-height:14px;height:14px;letter-spacing:-0.156px;">Car Supplier</div>
<div class="a" style="left:1244px;top:368px;width:25px;height:19px;box-shadow:inset 0 2px 0 #fff,inset 1px 0 0 #fff,inset 0 -1px 0 #484844,inset 0 -2px 0 #8c8880,inset -1px 0 0 #6c6a64,inset -2px 0 0 #a09c94;"></div>
<div class="a" style="left:1245px;top:372px;line-height:14px;height:14px;letter-spacing:0.600px;">AC</div>
<div class="a" style="left:1269px;top:368px;width:30px;height:19px;box-shadow:inset 0 2px 0 #fff,inset 1px 0 0 #fff,inset 0 -1px 0 #484844,inset 0 -2px 0 #8c8880,inset -1px 0 0 #6c6a64,inset -2px 0 0 #a09c94;"></div>
<div class="a" style="left:1271px;top:372px;line-height:14px;height:14px;">T</div>
<svg class="a" style="left:543px;top:372px" width="13" height="11"><path d="M0.5 0.5h12l-5 5.5v4.5l-2-1.5v-3z" fill="#fff" stroke="#000" stroke-width="1"/></svg>
<svg class="a" style="left:1159px;top:376px" width="8" height="5"><path d="M0 0h7.5l-3.75 4.5z" fill="#848284"/></svg>
<div class="a" style="left:214px;top:386px;width:1352px;height:366px;overflow:hidden;">
<div class="a" style="left:0px;top:1px;width:1352px;height:15px;background:#08246b;"></div>
<div class="a" style="left:2.5px;top:2px;line-height:14px;color:#fff;"><span style="letter-spacing:-0.043px">Toyota Corolla Or si</span><span style="letter-spacing:0.85px">...</span></div>
<div class="a" style="left:120px;top:2px;width:21.4px;text-align:right;line-height:14px;color:#fff;">5</div>
<div class="a" style="left:146.6px;top:2px;line-height:14px;color:#fff;"><span style="letter-spacing:-0.054px">Car(Intermediate) - Inclusive</span></div>
<div class="a" style="left:346.6px;top:2px;line-height:14px;color:#fff;"><span style="letter-spacing:-0.063px">Flexible Car</span><span style="letter-spacing:0.85px">...</span></div>
<div class="a" style="left:422.5px;top:2px;line-height:14px;color:#fff;">Thu</div>
<div class="a" style="left:456.6px;top:2px;line-height:14px;color:#fff;">16/08/2018</div>
<div class="a" style="left:526.6px;top:2px;line-height:14px;color:#fff;">19:00</div>
<div class="a" style="left:567.5px;top:2px;line-height:14px;color:#fff;">Thu</div>
<div class="a" style="left:601.6px;top:2px;line-height:14px;color:#fff;">30/08/2018</div>
<div class="a" style="left:671.6px;top:2px;line-height:14px;color:#fff;">17:25</div>
<div class="a" style="left:710px;top:2px;width:21.4px;text-align:right;line-height:14px;color:#fff;">14</div>
<div class="a" style="left:736.6px;top:2px;line-height:14px;color:#fff;"><span style="letter-spacing:-0.064px">On Air</span><span style="letter-spacing:0.85px">...</span></div>
<div class="a" style="left:786.6px;top:2px;line-height:14px;color:#fff;"><span style="letter-spacing:-0.064px">On Air</span><span style="letter-spacing:0.85px">...</span></div>
<div class="a" style="left:835px;top:2px;width:52.1px;text-align:right;line-height:14px;color:#fff;">451.90</div>
<div class="a" style="left:890px;top:2px;width:62.1px;text-align:right;line-height:14px;color:#fff;">451.90</div>
<div class="a" style="left:956.6px;top:2px;line-height:14px;color:#fff;"><span style="letter-spacing:-0.376px">Alamo</span></div>
<div class="a" style="left:1031.6px;top:2px;line-height:14px;color:#fff;">yes</div>
<div class="a" style="left:1056.6px;top:2px;line-height:14px;color:#fff;">auto</div>
<div class="a" style="left:0px;top:16px;width:1085px;height:14px;background:#b5dfff;"></div>
<div class="a" style="left:0px;top:30px;width:1352px;height:1px;background:#d6d3ce;"></div>
<div class="a" style="left:2.5px;top:17px;line-height:14px;"><span style="letter-spacing:-0.043px">Toyota Corolla Or si</span><span style="letter-spacing:0.85px">...</span></div>
<div class="a" style="left:120px;top:17px;width:21.4px;text-align:right;line-height:14px;">5</div>
<div class="a" style="left:146.6px;top:17px;line-height:14px;"><span style="letter-spacing:-0.054px">Car(Intermediate) - Inclusive</span></div>
<div class="a" style="left:346.6px;top:17px;line-height:14px;"><span style="letter-spacing:-0.063px">Flexible Car</span><span style="letter-spacing:0.85px">...</span></div>
<div class="a" style="left:422.5px;top:17px;line-height:14px;">Thu</div>
<div class="a" style="left:456.6px;top:17px;line-height:14px;">16/08/2018</div>
<div class="a" style="left:526.6px;top:17px;line-height:14px;">19:00</div>
<div class="a" style="left:567.5px;top:17px;line-height:14px;">Thu</div>
<div class="a" style="left:601.6px;top:17px;line-height:14px;">30/08/2018</div>
<div class="a" style="left:671.6px;top:17px;line-height:14px;">17:25</div>
<div class="a" style="left:710px;top:17px;width:21.4px;text-align:right;line-height:14px;">14</div>
<div class="a" style="left:736.6px;top:17px;line-height:14px;"><span style="letter-spacing:-0.064px">On Air</span><span style="letter-spacing:0.85px">...</span></div>
<div class="a" style="left:786.6px;top:17px;line-height:14px;"><span style="letter-spacing:-0.064px">On Air</span><span style="letter-spacing:0.85px">...</span></div>
<div class="a" style="left:835px;top:17px;width:52.1px;text-align:right;line-height:14px;">451.90</div>
<div class="a" style="left:890px;top:17px;width:62.1px;text-align:right;line-height:14px;">451.90</div>
<div class="a" style="left:956.6px;top:17px;line-height:14px;"><span style="letter-spacing:-0.376px">Alamo</span></div>
<div class="a" style="left:1031.6px;top:17px;line-height:14px;">yes</div>
<div class="a" style="left:1056.6px;top:17px;line-height:14px;">auto</div>
<div class="a" style="left:0px;top:31px;width:1085px;height:14px;background:#b5dfff;"></div>
<div class="a" style="left:0px;top:45px;width:1352px;height:1px;background:#d6d3ce;"></div>
<div class="a" style="left:2.5px;top:32px;line-height:14px;"><span style="letter-spacing:-0.043px">Toyota Corolla Or si</span><span style="letter-spacing:0.85px">...</span></div>
<div class="a" style="left:120px;top:32px;width:21.4px;text-align:right;line-height:14px;">5</div>
<div class="a" style="left:146.6px;top:32px;line-height:14px;"><span style="letter-spacing:-0.092px">Intermediate - Inclusive</span></div>
<div class="a" style="left:346.6px;top:32px;line-height:14px;"><span style="letter-spacing:-0.063px">Flexible Car</span><span style="letter-spacing:0.85px">...</span></div>
<div class="a" style="left:422.5px;top:32px;line-height:14px;">Thu</div>
<div class="a" style="left:456.6px;top:32px;line-height:14px;">16/08/2018</div>
<div class="a" style="left:526.6px;top:32px;line-height:14px;">19:00</div>
<div class="a" style="left:567.5px;top:32px;line-height:14px;">Thu</div>
<div class="a" style="left:601.6px;top:32px;line-height:14px;">30/08/2018</div>
<div class="a" style="left:671.6px;top:32px;line-height:14px;">17:25</div>
<div class="a" style="left:710px;top:32px;width:21.4px;text-align:right;line-height:14px;">14</div>
<div class="a" style="left:736.6px;top:32px;line-height:14px;"><span style="letter-spacing:-0.064px">On Air</span><span style="letter-spacing:0.85px">...</span></div>
<div class="a" style="left:786.6px;top:32px;line-height:14px;"><span style="letter-spacing:-0.064px">On Air</span><span style="letter-spacing:0.85px">...</span></div>
<div class="a" style="left:835px;top:32px;width:52.1px;text-align:right;line-height:14px;">461.39</div>
<div class="a" style="left:890px;top:32px;width:62.1px;text-align:right;line-height:14px;">461.39</div>
<div class="a" style="left:956.6px;top:32px;line-height:14px;"><span style="letter-spacing:-0.376px">Alamo</span></div>
<div class="a" style="left:1031.6px;top:32px;line-height:14px;">yes</div>
<div class="a" style="left:1056.6px;top:32px;line-height:14px;">auto</div>
<div class="a" style="left:0px;top:46px;width:1085px;height:14px;background:#b5dfff;"></div>
<div class="a" style="left:0px;top:60px;width:1352px;height:1px;background:#d6d3ce;"></div>
<div class="a" style="left:2.5px;top:47px;line-height:14px;"><span style="letter-spacing:-0.043px">Toyota Corolla Or si</span><span style="letter-spacing:0.85px">...</span></div>
<div class="a" style="left:120px;top:47px;width:21.4px;text-align:right;line-height:14px;">5</div>
<div class="a" style="left:146.6px;top:47px;line-height:14px;"><span style="letter-spacing:-0.092px">Intermediate - Inclusive</span></div>
<div class="a" style="left:346.6px;top:47px;line-height:14px;"><span style="letter-spacing:-0.063px">Flexible Car</span><span style="letter-spacing:0.85px">...</span></div>
<div class="a" style="left:422.5px;top:47px;line-height:14px;">Thu</div>
<div class="a" style="left:456.6px;top:47px;line-height:14px;">16/08/2018</div>
<div class="a" style="left:526.6px;top:47px;line-height:14px;">19:00</div>
<div class="a" style="left:567.5px;top:47px;line-height:14px;">Thu</div>
<div class="a" style="left:601.6px;top:47px;line-height:14px;">30/08/2018</div>
<div class="a" style="left:671.6px;top:47px;line-height:14px;">17:25</div>
<div class="a" style="left:710px;top:47px;width:21.4px;text-align:right;line-height:14px;">14</div>
<div class="a" style="left:736.6px;top:47px;line-height:14px;"><span style="letter-spacing:-0.064px">On Air</span><span style="letter-spacing:0.85px">...</span></div>
<div class="a" style="left:786.6px;top:47px;line-height:14px;"><span style="letter-spacing:-0.064px">On Air</span><span style="letter-spacing:0.85px">...</span></div>
<div class="a" style="left:835px;top:47px;width:52.1px;text-align:right;line-height:14px;">461.39</div>
<div class="a" style="left:890px;top:47px;width:62.1px;text-align:right;line-height:14px;">461.39</div>
<div class="a" style="left:956.6px;top:47px;line-height:14px;"><span style="letter-spacing:-0.376px">Alamo</span></div>
<div class="a" style="left:1031.6px;top:47px;line-height:14px;">yes</div>
<div class="a" style="left:1056.6px;top:47px;line-height:14px;">auto</div>
<div class="a" style="left:0px;top:61px;width:1085px;height:14px;background:#b5dfff;"></div>
<div class="a" style="left:0px;top:75px;width:1352px;height:1px;background:#d6d3ce;"></div>
<div class="a" style="left:2.5px;top:62px;line-height:14px;"><span style="letter-spacing:-0.043px">Toyota Corolla Or si</span><span style="letter-spacing:0.85px">...</span></div>
<div class="a" style="left:120px;top:62px;width:21.4px;text-align:right;line-height:14px;">5</div>
<div class="a" style="left:146.6px;top:62px;line-height:14px;"><span style="letter-spacing:-0.088px">Car(Intermediate) - Inclusive - Plus E</span><span style="letter-spacing:0.85px">...</span></div>
<div class="a" style="left:346.6px;top:62px;line-height:14px;"><span style="letter-spacing:-0.063px">Flexible Car</span><span style="letter-spacing:0.85px">...</span></div>
<div class="a" style="left:422.5px;top:62px;line-height:14px;">Thu</div>
<div class="a" style="left:456.6px;top:62px;line-height:14px;">16/08/2018</div>
<div class="a" style="left:526.6px;top:62px;line-height:14px;">19:00</div>
<div class="a" style="left:567.5px;top:62px;line-height:14px;">Thu</div>
<div class="a" style="left:601.6px;top:62px;line-height:14px;">30/08/2018</div>
<div class="a" style="left:671.6px;top:62px;line-height:14px;">17:25</div>
<div class="a" style="left:710px;top:62px;width:21.4px;text-align:right;line-height:14px;">14</div>
<div class="a" style="left:736.6px;top:62px;line-height:14px;"><span style="letter-spacing:-0.064px">On Air</span><span style="letter-spacing:0.85px">...</span></div>
<div class="a" style="left:786.6px;top:62px;line-height:14px;"><span style="letter-spacing:-0.064px">On Air</span><span style="letter-spacing:0.85px">...</span></div>
<div class="a" style="left:835px;top:62px;width:52.1px;text-align:right;line-height:14px;">489.93</div>
<div class="a" style="left:890px;top:62px;width:62.1px;text-align:right;line-height:14px;">489.93</div>
<div class="a" style="left:956.6px;top:62px;line-height:14px;"><span style="letter-spacing:-0.376px">Alamo</span></div>
<div class="a" style="left:1031.6px;top:62px;line-height:14px;">yes</div>
<div class="a" style="left:1056.6px;top:62px;line-height:14px;">auto</div>
<div class="a" style="left:0px;top:76px;width:1085px;height:14px;background:#b5dfff;"></div>
<div class="a" style="left:0px;top:90px;width:1352px;height:1px;background:#d6d3ce;"></div>
<div class="a" style="left:2.5px;top:77px;line-height:14px;"><span style="letter-spacing:-0.043px">Toyota Corolla Or si</span><span style="letter-spacing:0.85px">...</span></div>
<div class="a" style="left:120px;top:77px;width:21.4px;text-align:right;line-height:14px;">5</div>
<div class="a" style="left:146.6px;top:77px;line-height:14px;"><span style="letter-spacing:-0.088px">Car(Intermediate) - Inclusive - Plus E</span><span style="letter-spacing:0.85px">...</span></div>
<div class="a" style="left:346.6px;top:77px;line-height:14px;"><span style="letter-spacing:-0.063px">Flexible Car</span><span style="letter-spacing:0.85px">...</span></div>
<div class="a" style="left:422.5px;top:77px;line-height:14px;">Thu</div>
<div class="a" style="left:456.6px;top:77px;line-height:14px;">16/08/2018</div>
<div class="a" style="left:526.6px;top:77px;line-height:14px;">19:00</div>
<div class="a" style="left:567.5px;top:77px;line-height:14px;">Thu</div>
<div class="a" style="left:601.6px;top:77px;line-height:14px;">30/08/2018</div>
<div class="a" style="left:671.6px;top:77px;line-height:14px;">17:25</div>
<div class="a" style="left:710px;top:77px;width:21.4px;text-align:right;line-height:14px;">14</div>
<div class="a" style="left:736.6px;top:77px;line-height:14px;"><span style="letter-spacing:-0.064px">On Air</span><span style="letter-spacing:0.85px">...</span></div>
<div class="a" style="left:786.6px;top:77px;line-height:14px;"><span style="letter-spacing:-0.064px">On Air</span><span style="letter-spacing:0.85px">...</span></div>
<div class="a" style="left:835px;top:77px;width:52.1px;text-align:right;line-height:14px;">489.93</div>
<div class="a" style="left:890px;top:77px;width:62.1px;text-align:right;line-height:14px;">489.93</div>
<div class="a" style="left:956.6px;top:77px;line-height:14px;"><span style="letter-spacing:-0.376px">Alamo</span></div>
<div class="a" style="left:1031.6px;top:77px;line-height:14px;">yes</div>
<div class="a" style="left:1056.6px;top:77px;line-height:14px;">auto</div>
<div class="a" style="left:0px;top:91px;width:1085px;height:14px;background:#b5dfff;"></div>
<div class="a" style="left:0px;top:105px;width:1352px;height:1px;background:#d6d3ce;"></div>
<div class="a" style="left:2.5px;top:92px;line-height:14px;"><span style="letter-spacing:-0.043px">Toyota Corolla Or si</span><span style="letter-spacing:0.85px">...</span></div>
<div class="a" style="left:120px;top:92px;width:21.4px;text-align:right;line-height:14px;">5</div>
<div class="a" style="left:146.6px;top:92px;line-height:14px;"><span style="letter-spacing:-0.121px">Intermediate - Inclusive - Plus Excess </span><span style="letter-spacing:0.85px">...</span></div>
<div class="a" style="left:346.6px;top:92px;line-height:14px;"><span style="letter-spacing:-0.063px">Flexible Car</span><span style="letter-spacing:0.85px">...</span></div>
<div class="a" style="left:422.5px;top:92px;line-height:14px;">Thu</div>
<div class="a" style="left:456.6px;top:92px;line-height:14px;">16/08/2018</div>
<div class="a" style="left:526.6px;top:92px;line-height:14px;">19:00</div>
<div class="a" style="left:567.5px;top:92px;line-height:14px;">Thu</div>
<div class="a" style="left:601.6px;top:92px;line-height:14px;">30/08/2018</div>
<div class="a" style="left:671.6px;top:92px;line-height:14px;">17:25</div>
<div class="a" style="left:710px;top:92px;width:21.4px;text-align:right;line-height:14px;">14</div>
<div class="a" style="left:736.6px;top:92px;line-height:14px;"><span style="letter-spacing:-0.064px">On Air</span><span style="letter-spacing:0.85px">...</span></div>
<div class="a" style="left:786.6px;top:92px;line-height:14px;"><span style="letter-spacing:-0.064px">On Air</span><span style="letter-spacing:0.85px">...</span></div>
<div class="a" style="left:835px;top:92px;width:52.1px;text-align:right;line-height:14px;">499.43</div>
<div class="a" style="left:890px;top:92px;width:62.1px;text-align:right;line-height:14px;">499.43</div>
<div class="a" style="left:956.6px;top:92px;line-height:14px;"><span style="letter-spacing:-0.376px">Alamo</span></div>
<div class="a" style="left:1031.6px;top:92px;line-height:14px;">yes</div>
<div class="a" style="left:1056.6px;top:92px;line-height:14px;">auto</div>
<div class="a" style="left:0px;top:106px;width:1085px;height:14px;background:#b5dfff;"></div>
<div class="a" style="left:0px;top:120px;width:1352px;height:1px;background:#d6d3ce;"></div>
<div class="a" style="left:2.5px;top:107px;line-height:14px;"><span style="letter-spacing:-0.043px">Toyota Corolla Or si</span><span style="letter-spacing:0.85px">...</span></div>
<div class="a" style="left:120px;top:107px;width:21.4px;text-align:right;line-height:14px;">5</div>
<div class="a" style="left:146.6px;top:107px;line-height:14px;"><span style="letter-spacing:-0.121px">Intermediate - Inclusive - Plus Excess </span><span style="letter-spacing:0.85px">...</span></div>
<div class="a" style="left:346.6px;top:107px;line-height:14px;"><span style="letter-spacing:-0.063px">Flexible Car</span><span style="letter-spacing:0.85px">...</span></div>
<div class="a" style="left:422.5px;top:107px;line-height:14px;">Thu</div>
<div class="a" style="left:456.6px;top:107px;line-height:14px;">16/08/2018</div>
<div class="a" style="left:526.6px;top:107px;line-height:14px;">19:00</div>
<div class="a" style="left:567.5px;top:107px;line-height:14px;">Thu</div>
<div class="a" style="left:601.6px;top:107px;line-height:14px;">30/08/2018</div>
<div class="a" style="left:671.6px;top:107px;line-height:14px;">17:25</div>
<div class="a" style="left:710px;top:107px;width:21.4px;text-align:right;line-height:14px;">14</div>
<div class="a" style="left:736.6px;top:107px;line-height:14px;"><span style="letter-spacing:-0.064px">On Air</span><span style="letter-spacing:0.85px">...</span></div>
<div class="a" style="left:786.6px;top:107px;line-height:14px;"><span style="letter-spacing:-0.064px">On Air</span><span style="letter-spacing:0.85px">...</span></div>
<div class="a" style="left:835px;top:107px;width:52.1px;text-align:right;line-height:14px;">499.43</div>
<div class="a" style="left:890px;top:107px;width:62.1px;text-align:right;line-height:14px;">499.43</div>
<div class="a" style="left:956.6px;top:107px;line-height:14px;"><span style="letter-spacing:-0.376px">Alamo</span></div>
<div class="a" style="left:1031.6px;top:107px;line-height:14px;">yes</div>
<div class="a" style="left:1056.6px;top:107px;line-height:14px;">auto</div>
<div class="a" style="left:0px;top:121px;width:1085px;height:14px;background:#b5dfff;"></div>
<div class="a" style="left:0px;top:135px;width:1352px;height:1px;background:#d6d3ce;"></div>
<div class="a" style="left:2.5px;top:122px;line-height:14px;"><span style="letter-spacing:-0.043px">Toyota Corolla Or si</span><span style="letter-spacing:0.85px">...</span></div>
<div class="a" style="left:120px;top:122px;width:21.4px;text-align:right;line-height:14px;">5</div>
<div class="a" style="left:146.6px;top:122px;line-height:14px;"><span style="letter-spacing:-0.063px">Car(Intermediate) - Gold</span></div>
<div class="a" style="left:346.6px;top:122px;line-height:14px;"><span style="letter-spacing:-0.063px">Flexible Car</span><span style="letter-spacing:0.85px">...</span></div>
<div class="a" style="left:422.5px;top:122px;line-height:14px;">Thu</div>
<div class="a" style="left:456.6px;top:122px;line-height:14px;">16/08/2018</div>
<div class="a" style="left:526.6px;top:122px;line-height:14px;">19:00</div>
<div class="a" style="left:567.5px;top:122px;line-height:14px;">Thu</div>
<div class="a" style="left:601.6px;top:122px;line-height:14px;">30/08/2018</div>
<div class="a" style="left:671.6px;top:122px;line-height:14px;">17:25</div>
<div class="a" style="left:710px;top:122px;width:21.4px;text-align:right;line-height:14px;">14</div>
<div class="a" style="left:736.6px;top:122px;line-height:14px;"><span style="letter-spacing:-0.064px">On Air</span><span style="letter-spacing:0.85px">...</span></div>
<div class="a" style="left:786.6px;top:122px;line-height:14px;"><span style="letter-spacing:-0.064px">On Air</span><span style="letter-spacing:0.85px">...</span></div>
<div class="a" style="left:835px;top:122px;width:52.1px;text-align:right;line-height:14px;">506.99</div>
<div class="a" style="left:890px;top:122px;width:62.1px;text-align:right;line-height:14px;">506.99</div>
<div class="a" style="left:956.6px;top:122px;line-height:14px;"><span style="letter-spacing:-0.376px">Alamo</span></div>
<div class="a" style="left:1031.6px;top:122px;line-height:14px;">yes</div>
<div class="a" style="left:1056.6px;top:122px;line-height:14px;">auto</div>
<div class="a" style="left:0px;top:136px;width:1085px;height:14px;background:#b5dfff;"></div>
<div class="a" style="left:0px;top:150px;width:1352px;height:1px;background:#d6d3ce;"></div>
<div class="a" style="left:2.5px;top:137px;line-height:14px;"><span style="letter-spacing:-0.043px">Toyota Corolla Or si</span><span style="letter-spacing:0.85px">...</span></div>
<div class="a" style="left:120px;top:137px;width:21.4px;text-align:right;line-height:14px;">5</div>
<div class="a" style="left:146.6px;top:137px;line-height:14px;"><span style="letter-spacing:-0.063px">Car(Intermediate) - Gold</span></div>
<div class="a" style="left:346.6px;top:137px;line-height:14px;"><span style="letter-spacing:-0.063px">Flexible Car</span><span style="letter-spacing:0.85px">...</span></div>
<div class="a" style="left:422.5px;top:137px;line-height:14px;">Thu</div>
<div class="a" style="left:456.6px;top:137px;line-height:14px;">16/08/2018</div>
<div class="a" style="left:526.6px;top:137px;line-height:14px;">19:00</div>
<div class="a" style="left:567.5px;top:137px;line-height:14px;">Thu</div>
<div class="a" style="left:601.6px;top:137px;line-height:14px;">30/08/2018</div>
<div class="a" style="left:671.6px;top:137px;line-height:14px;">17:25</div>
<div class="a" style="left:710px;top:137px;width:21.4px;text-align:right;line-height:14px;">14</div>
<div class="a" style="left:736.6px;top:137px;line-height:14px;"><span style="letter-spacing:-0.064px">On Air</span><span style="letter-spacing:0.85px">...</span></div>
<div class="a" style="left:786.6px;top:137px;line-height:14px;"><span style="letter-spacing:-0.064px">On Air</span><span style="letter-spacing:0.85px">...</span></div>
<div class="a" style="left:835px;top:137px;width:52.1px;text-align:right;line-height:14px;">506.99</div>
<div class="a" style="left:890px;top:137px;width:62.1px;text-align:right;line-height:14px;">506.99</div>
<div class="a" style="left:956.6px;top:137px;line-height:14px;"><span style="letter-spacing:-0.376px">Alamo</span></div>
<div class="a" style="left:1031.6px;top:137px;line-height:14px;">yes</div>
<div class="a" style="left:1056.6px;top:137px;line-height:14px;">auto</div>
<div class="a" style="left:0px;top:151px;width:1085px;height:14px;background:#b5dfff;"></div>
<div class="a" style="left:0px;top:165px;width:1352px;height:1px;background:#d6d3ce;"></div>
<div class="a" style="left:2.5px;top:152px;line-height:14px;"><span style="letter-spacing:-0.043px">Toyota Corolla Or si</span><span style="letter-spacing:0.85px">...</span></div>
<div class="a" style="left:120px;top:152px;width:21.4px;text-align:right;line-height:14px;">5</div>
<div class="a" style="left:146.6px;top:152px;line-height:14px;"><span style="letter-spacing:-0.098px">Intermediate - Gold</span></div>
<div class="a" style="left:346.6px;top:152px;line-height:14px;"><span style="letter-spacing:-0.063px">Flexible Car</span><span style="letter-spacing:0.85px">...</span></div>
<div class="a" style="left:422.5px;top:152px;line-height:14px;">Thu</div>
<div class="a" style="left:456.6px;top:152px;line-height:14px;">16/08/2018</div>
<div class="a" style="left:526.6px;top:152px;line-height:14px;">19:00</div>
<div class="a" style="left:567.5px;top:152px;line-height:14px;">Thu</div>
<div class="a" style="left:601.6px;top:152px;line-height:14px;">30/08/2018</div>
<div class="a" style="left:671.6px;top:152px;line-height:14px;">17:25</div>
<div class="a" style="left:710px;top:152px;width:21.4px;text-align:right;line-height:14px;">14</div>
<div class="a" style="left:736.6px;top:152px;line-height:14px;"><span style="letter-spacing:-0.064px">On Air</span><span style="letter-spacing:0.85px">...</span></div>
<div class="a" style="left:786.6px;top:152px;line-height:14px;"><span style="letter-spacing:-0.064px">On Air</span><span style="letter-spacing:0.85px">...</span></div>
<div class="a" style="left:835px;top:152px;width:52.1px;text-align:right;line-height:14px;">514.61</div>
<div class="a" style="left:890px;top:152px;width:62.1px;text-align:right;line-height:14px;">514.61</div>
<div class="a" style="left:956.6px;top:152px;line-height:14px;"><span style="letter-spacing:-0.376px">Alamo</span></div>
<div class="a" style="left:1031.6px;top:152px;line-height:14px;">yes</div>
<div class="a" style="left:1056.6px;top:152px;line-height:14px;">auto</div>
<div class="a" style="left:0px;top:166px;width:1085px;height:14px;background:#b5dfff;"></div>
<div class="a" style="left:0px;top:180px;width:1352px;height:1px;background:#d6d3ce;"></div>
<div class="a" style="left:2.5px;top:167px;line-height:14px;"><span style="letter-spacing:-0.043px">Toyota Corolla Or si</span><span style="letter-spacing:0.85px">...</span></div>
<div class="a" style="left:120px;top:167px;width:21.4px;text-align:right;line-height:14px;">5</div>
<div class="a" style="left:146.6px;top:167px;line-height:14px;"><span style="letter-spacing:-0.098px">Intermediate - Gold</span></div>
<div class="a" style="left:346.6px;top:167px;line-height:14px;"><span style="letter-spacing:-0.063px">Flexible Car</span><span style="letter-spacing:0.85px">...</span></div>
<div class="a" style="left:422.5px;top:167px;line-height:14px;">Thu</div>
<div class="a" style="left:456.6px;top:167px;line-height:14px;">16/08/2018</div>
<div class="a" style="left:526.6px;top:167px;line-height:14px;">19:00</div>
<div class="a" style="left:567.5px;top:167px;line-height:14px;">Thu</div>
<div class="a" style="left:601.6px;top:167px;line-height:14px;">30/08/2018</div>
<div class="a" style="left:671.6px;top:167px;line-height:14px;">17:25</div>
<div class="a" style="left:710px;top:167px;width:21.4px;text-align:right;line-height:14px;">14</div>
<div class="a" style="left:736.6px;top:167px;line-height:14px;"><span style="letter-spacing:-0.064px">On Air</span><span style="letter-spacing:0.85px">...</span></div>
<div class="a" style="left:786.6px;top:167px;line-height:14px;"><span style="letter-spacing:-0.064px">On Air</span><span style="letter-spacing:0.85px">...</span></div>
<div class="a" style="left:835px;top:167px;width:52.1px;text-align:right;line-height:14px;">514.61</div>
<div class="a" style="left:890px;top:167px;width:62.1px;text-align:right;line-height:14px;">514.61</div>
<div class="a" style="left:956.6px;top:167px;line-height:14px;"><span style="letter-spacing:-0.376px">Alamo</span></div>
<div class="a" style="left:1031.6px;top:167px;line-height:14px;">yes</div>
<div class="a" style="left:1056.6px;top:167px;line-height:14px;">auto</div>
<div class="a" style="left:0px;top:181px;width:1085px;height:14px;background:#b5dfff;"></div>
<div class="a" style="left:0px;top:195px;width:1352px;height:1px;background:#d6d3ce;"></div>
<div class="a" style="left:2.5px;top:182px;line-height:14px;"><span style="letter-spacing:-0.219px">Ford Escape Or simila</span><span style="letter-spacing:0.85px">...</span></div>
<div class="a" style="left:120px;top:182px;width:21.4px;text-align:right;line-height:14px;">5</div>
<div class="a" style="left:146.6px;top:182px;line-height:14px;"><span style="letter-spacing:-0.083px">SUV(Intermediate) - Inclusive</span></div>
<div class="a" style="left:346.6px;top:182px;line-height:14px;"><span style="letter-spacing:-0.063px">Flexible Car</span><span style="letter-spacing:0.85px">...</span></div>
<div class="a" style="left:422.5px;top:182px;line-height:14px;">Thu</div>
<div class="a" style="left:456.6px;top:182px;line-height:14px;">16/08/2018</div>
<div class="a" style="left:526.6px;top:182px;line-height:14px;">19:00</div>
<div class="a" style="left:567.5px;top:182px;line-height:14px;">Thu</div>
<div class="a" style="left:601.6px;top:182px;line-height:14px;">30/08/2018</div>
<div class="a" style="left:671.6px;top:182px;line-height:14px;">17:25</div>
<div class="a" style="left:710px;top:182px;width:21.4px;text-align:right;line-height:14px;">14</div>
<div class="a" style="left:736.6px;top:182px;line-height:14px;"><span style="letter-spacing:-0.064px">On Air</span><span style="letter-spacing:0.85px">...</span></div>
<div class="a" style="left:786.6px;top:182px;line-height:14px;"><span style="letter-spacing:-0.064px">On Air</span><span style="letter-spacing:0.85px">...</span></div>
<div class="a" style="left:835px;top:182px;width:52.1px;text-align:right;line-height:14px;">517.60</div>
<div class="a" style="left:890px;top:182px;width:62.1px;text-align:right;line-height:14px;">517.60</div>
<div class="a" style="left:956.6px;top:182px;line-height:14px;"><span style="letter-spacing:-0.376px">Alamo</span></div>
<div class="a" style="left:1031.6px;top:182px;line-height:14px;">yes</div>
<div class="a" style="left:1056.6px;top:182px;line-height:14px;">auto</div>
<div class="a" style="left:0px;top:196px;width:1085px;height:14px;background:#b5dfff;"></div>
<div class="a" style="left:0px;top:210px;width:1352px;height:1px;background:#d6d3ce;"></div>
<div class="a" style="left:2.5px;top:197px;line-height:14px;"><span style="letter-spacing:-0.219px">Ford Escape Or simila</span><span style="letter-spacing:0.85px">...</span></div>
<div class="a" style="left:120px;top:197px;width:21.4px;text-align:right;line-height:14px;">5</div>
<div class="a" style="left:146.6px;top:197px;line-height:14px;"><span style="letter-spacing:-0.083px">SUV(Intermediate) - Inclusive</span></div>
<div class="a" style="left:346.6px;top:197px;line-height:14px;"><span style="letter-spacing:-0.063px">Flexible Car</span><span style="letter-spacing:0.85px">...</span></div>
<div class="a" style="left:422.5px;top:197px;line-height:14px;">Thu</div>
<div class="a" style="left:456.6px;top:197px;line-height:14px;">16/08/2018</div>
<div class="a" style="left:526.6px;top:197px;line-height:14px;">19:00</div>
<div class="a" style="left:567.5px;top:197px;line-height:14px;">Thu</div>
<div class="a" style="left:601.6px;top:197px;line-height:14px;">30/08/2018</div>
<div class="a" style="left:671.6px;top:197px;line-height:14px;">17:25</div>
<div class="a" style="left:710px;top:197px;width:21.4px;text-align:right;line-height:14px;">14</div>
<div class="a" style="left:736.6px;top:197px;line-height:14px;"><span style="letter-spacing:-0.064px">On Air</span><span style="letter-spacing:0.85px">...</span></div>
<div class="a" style="left:786.6px;top:197px;line-height:14px;"><span style="letter-spacing:-0.064px">On Air</span><span style="letter-spacing:0.85px">...</span></div>
<div class="a" style="left:835px;top:197px;width:52.1px;text-align:right;line-height:14px;">517.60</div>
<div class="a" style="left:890px;top:197px;width:62.1px;text-align:right;line-height:14px;">517.60</div>
<div class="a" style="left:956.6px;top:197px;line-height:14px;"><span style="letter-spacing:-0.376px">Alamo</span></div>
<div class="a" style="left:1031.6px;top:197px;line-height:14px;">yes</div>
<div class="a" style="left:1056.6px;top:197px;line-height:14px;">auto</div>
<div class="a" style="left:0px;top:211px;width:1085px;height:14px;background:#b5dfff;"></div>
<div class="a" style="left:0px;top:225px;width:1352px;height:1px;background:#d6d3ce;"></div>
<div class="a" style="left:2.5px;top:212px;line-height:14px;"><span style="letter-spacing:-0.043px">Toyota Corolla Or si</span><span style="letter-spacing:0.85px">...</span></div>
<div class="a" style="left:120px;top:212px;width:21.4px;text-align:right;line-height:14px;">5</div>
<div class="a" style="left:146.6px;top:212px;line-height:14px;"><span style="letter-spacing:-0.107px">Car(Intermediate) - Gold - Plus Exces</span><span style="letter-spacing:0.85px">...</span></div>
<div class="a" style="left:346.6px;top:212px;line-height:14px;"><span style="letter-spacing:-0.063px">Flexible Car</span><span style="letter-spacing:0.85px">...</span></div>
<div class="a" style="left:422.5px;top:212px;line-height:14px;">Thu</div>
<div class="a" style="left:456.6px;top:212px;line-height:14px;">16/08/2018</div>
<div class="a" style="left:526.6px;top:212px;line-height:14px;">19:00</div>
<div class="a" style="left:567.5px;top:212px;line-height:14px;">Thu</div>
<div class="a" style="left:601.6px;top:212px;line-height:14px;">30/08/2018</div>
<div class="a" style="left:671.6px;top:212px;line-height:14px;">17:25</div>
<div class="a" style="left:710px;top:212px;width:21.4px;text-align:right;line-height:14px;">14</div>
<div class="a" style="left:736.6px;top:212px;line-height:14px;"><span style="letter-spacing:-0.064px">On Air</span><span style="letter-spacing:0.85px">...</span></div>
<div class="a" style="left:786.6px;top:212px;line-height:14px;"><span style="letter-spacing:-0.064px">On Air</span><span style="letter-spacing:0.85px">...</span></div>
<div class="a" style="left:835px;top:212px;width:52.1px;text-align:right;line-height:14px;">545.03</div>
<div class="a" style="left:890px;top:212px;width:62.1px;text-align:right;line-height:14px;">545.03</div>
<div class="a" style="left:956.6px;top:212px;line-height:14px;"><span style="letter-spacing:-0.376px">Alamo</span></div>
<div class="a" style="left:1031.6px;top:212px;line-height:14px;">yes</div>
<div class="a" style="left:1056.6px;top:212px;line-height:14px;">auto</div>
<div class="a" style="left:0px;top:226px;width:1085px;height:14px;background:#b5dfff;"></div>
<div class="a" style="left:0px;top:240px;width:1352px;height:1px;background:#d6d3ce;"></div>
<div class="a" style="left:2.5px;top:227px;line-height:14px;"><span style="letter-spacing:-0.043px">Toyota Corolla Or si</span><span style="letter-spacing:0.85px">...</span></div>
<div class="a" style="left:120px;top:227px;width:21.4px;text-align:right;line-height:14px;">5</div>
<div class="a" style="left:146.6px;top:227px;line-height:14px;"><span style="letter-spacing:-0.107px">Car(Intermediate) - Gold - Plus Exces</span><span style="letter-spacing:0.85px">...</span></div>
<div class="a" style="left:346.6px;top:227px;line-height:14px;"><span style="letter-spacing:-0.063px">Flexible Car</span><span style="letter-spacing:0.85px">...</span></div>
<div class="a" style="left:422.5px;top:227px;line-height:14px;">Thu</div>
<div class="a" style="left:456.6px;top:227px;line-height:14px;">16/08/2018</div>
<div class="a" style="left:526.6px;top:227px;line-height:14px;">19:00</div>
<div class="a" style="left:567.5px;top:227px;line-height:14px;">Thu</div>
<div class="a" style="left:601.6px;top:227px;line-height:14px;">30/08/2018</div>
<div class="a" style="left:671.6px;top:227px;line-height:14px;">17:25</div>
<div class="a" style="left:710px;top:227px;width:21.4px;text-align:right;line-height:14px;">14</div>
<div class="a" style="left:736.6px;top:227px;line-height:14px;"><span style="letter-spacing:-0.064px">On Air</span><span style="letter-spacing:0.85px">...</span></div>
<div class="a" style="left:786.6px;top:227px;line-height:14px;"><span style="letter-spacing:-0.064px">On Air</span><span style="letter-spacing:0.85px">...</span></div>
<div class="a" style="left:835px;top:227px;width:52.1px;text-align:right;line-height:14px;">545.03</div>
<div class="a" style="left:890px;top:227px;width:62.1px;text-align:right;line-height:14px;">545.03</div>
<div class="a" style="left:956.6px;top:227px;line-height:14px;"><span style="letter-spacing:-0.376px">Alamo</span></div>
<div class="a" style="left:1031.6px;top:227px;line-height:14px;">yes</div>
<div class="a" style="left:1056.6px;top:227px;line-height:14px;">auto</div>
<div class="a" style="left:0px;top:241px;width:1085px;height:14px;background:#b5dfff;"></div>
<div class="a" style="left:0px;top:255px;width:1352px;height:1px;background:#d6d3ce;"></div>
<div class="a" style="left:2.5px;top:242px;line-height:14px;"><span style="letter-spacing:-0.043px">Toyota Corolla Or si</span><span style="letter-spacing:0.85px">...</span></div>
<div class="a" style="left:120px;top:242px;width:21.4px;text-align:right;line-height:14px;">5</div>
<div class="a" style="left:146.6px;top:242px;line-height:14px;"><span style="letter-spacing:-0.071px">Car(Intermediate) - Inclusive GPS</span></div>
<div class="a" style="left:346.6px;top:242px;line-height:14px;"><span style="letter-spacing:-0.063px">Flexible Car</span><span style="letter-spacing:0.85px">...</span></div>
<div class="a" style="left:422.5px;top:242px;line-height:14px;">Thu</div>
<div class="a" style="left:456.6px;top:242px;line-height:14px;">16/08/2018</div>
<div class="a" style="left:526.6px;top:242px;line-height:14px;">19:00</div>
<div class="a" style="left:567.5px;top:242px;line-height:14px;">Thu</div>
<div class="a" style="left:601.6px;top:242px;line-height:14px;">30/08/2018</div>
<div class="a" style="left:671.6px;top:242px;line-height:14px;">17:25</div>
<div class="a" style="left:710px;top:242px;width:21.4px;text-align:right;line-height:14px;">14</div>
<div class="a" style="left:736.6px;top:242px;line-height:14px;"><span style="letter-spacing:-0.064px">On Air</span><span style="letter-spacing:0.85px">...</span></div>
<div class="a" style="left:786.6px;top:242px;line-height:14px;"><span style="letter-spacing:-0.064px">On Air</span><span style="letter-spacing:0.85px">...</span></div>
<div class="a" style="left:835px;top:242px;width:52.1px;text-align:right;line-height:14px;">552.61</div>
<div class="a" style="left:890px;top:242px;width:62.1px;text-align:right;line-height:14px;">552.61</div>
<div class="a" style="left:956.6px;top:242px;line-height:14px;"><span style="letter-spacing:-0.376px">Alamo</span></div>
<div class="a" style="left:1031.6px;top:242px;line-height:14px;">yes</div>
<div class="a" style="left:1056.6px;top:242px;line-height:14px;">auto</div>
<div class="a" style="left:0px;top:256px;width:1085px;height:14px;background:#b5dfff;"></div>
<div class="a" style="left:0px;top:270px;width:1352px;height:1px;background:#d6d3ce;"></div>
<div class="a" style="left:2.5px;top:257px;line-height:14px;"><span style="letter-spacing:-0.043px">Toyota Corolla Or si</span><span style="letter-spacing:0.85px">...</span></div>
<div class="a" style="left:120px;top:257px;width:21.4px;text-align:right;line-height:14px;">5</div>
<div class="a" style="left:146.6px;top:257px;line-height:14px;"><span style="letter-spacing:-0.071px">Car(Intermediate) - Inclusive GPS</span></div>
<div class="a" style="left:346.6px;top:257px;line-height:14px;"><span style="letter-spacing:-0.063px">Flexible Car</span><span style="letter-spacing:0.85px">...</span></div>
<div class="a" style="left:422.5px;top:257px;line-height:14px;">Thu</div>
<div class="a" style="left:456.6px;top:257px;line-height:14px;">16/08/2018</div>
<div class="a" style="left:526.6px;top:257px;line-height:14px;">19:00</div>
<div class="a" style="left:567.5px;top:257px;line-height:14px;">Thu</div>
<div class="a" style="left:601.6px;top:257px;line-height:14px;">30/08/2018</div>
<div class="a" style="left:671.6px;top:257px;line-height:14px;">17:25</div>
<div class="a" style="left:710px;top:257px;width:21.4px;text-align:right;line-height:14px;">14</div>
<div class="a" style="left:736.6px;top:257px;line-height:14px;"><span style="letter-spacing:-0.064px">On Air</span><span style="letter-spacing:0.85px">...</span></div>
<div class="a" style="left:786.6px;top:257px;line-height:14px;"><span style="letter-spacing:-0.064px">On Air</span><span style="letter-spacing:0.85px">...</span></div>
<div class="a" style="left:835px;top:257px;width:52.1px;text-align:right;line-height:14px;">552.61</div>
<div class="a" style="left:890px;top:257px;width:62.1px;text-align:right;line-height:14px;">552.61</div>
<div class="a" style="left:956.6px;top:257px;line-height:14px;"><span style="letter-spacing:-0.376px">Alamo</span></div>
<div class="a" style="left:1031.6px;top:257px;line-height:14px;">yes</div>
<div class="a" style="left:1056.6px;top:257px;line-height:14px;">auto</div>
<div class="a" style="left:0px;top:271px;width:1085px;height:14px;background:#b5dfff;"></div>
<div class="a" style="left:0px;top:285px;width:1352px;height:1px;background:#d6d3ce;"></div>
<div class="a" style="left:2.5px;top:272px;line-height:14px;"><span style="letter-spacing:-0.043px">Toyota Corolla Or si</span><span style="letter-spacing:0.85px">...</span></div>
<div class="a" style="left:120px;top:272px;width:21.4px;text-align:right;line-height:14px;">5</div>
<div class="a" style="left:146.6px;top:272px;line-height:14px;"><span style="letter-spacing:-0.093px">Intermediate - Gold - Plus Excess Ref</span><span style="letter-spacing:0.85px">...</span></div>
<div class="a" style="left:346.6px;top:272px;line-height:14px;"><span style="letter-spacing:-0.063px">Flexible Car</span><span style="letter-spacing:0.85px">...</span></div>
<div class="a" style="left:422.5px;top:272px;line-height:14px;">Thu</div>
<div class="a" style="left:456.6px;top:272px;line-height:14px;">16/08/2018</div>
<div class="a" style="left:526.6px;top:272px;line-height:14px;">19:00</div>
<div class="a" style="left:567.5px;top:272px;line-height:14px;">Thu</div>
<div class="a" style="left:601.6px;top:272px;line-height:14px;">30/08/2018</div>
<div class="a" style="left:671.6px;top:272px;line-height:14px;">17:25</div>
<div class="a" style="left:710px;top:272px;width:21.4px;text-align:right;line-height:14px;">14</div>
<div class="a" style="left:736.6px;top:272px;line-height:14px;"><span style="letter-spacing:-0.064px">On Air</span><span style="letter-spacing:0.85px">...</span></div>
<div class="a" style="left:786.6px;top:272px;line-height:14px;"><span style="letter-spacing:-0.064px">On Air</span><span style="letter-spacing:0.85px">...</span></div>
<div class="a" style="left:835px;top:272px;width:52.1px;text-align:right;line-height:14px;">552.64</div>
<div class="a" style="left:890px;top:272px;width:62.1px;text-align:right;line-height:14px;">552.64</div>
<div class="a" style="left:956.6px;top:272px;line-height:14px;"><span style="letter-spacing:-0.376px">Alamo</span></div>
<div class="a" style="left:1031.6px;top:272px;line-height:14px;">yes</div>
<div class="a" style="left:1056.6px;top:272px;line-height:14px;">auto</div>
<div class="a" style="left:0px;top:286px;width:1085px;height:14px;background:#b5dfff;"></div>
<div class="a" style="left:0px;top:300px;width:1352px;height:1px;background:#d6d3ce;"></div>
<div class="a" style="left:2.5px;top:287px;line-height:14px;"><span style="letter-spacing:-0.043px">Toyota Corolla Or si</span><span style="letter-spacing:0.85px">...</span></div>
<div class="a" style="left:120px;top:287px;width:21.4px;text-align:right;line-height:14px;">5</div>
<div class="a" style="left:146.6px;top:287px;line-height:14px;"><span style="letter-spacing:-0.093px">Intermediate - Gold - Plus Excess Ref</span><span style="letter-spacing:0.85px">...</span></div>
<div class="a" style="left:346.6px;top:287px;line-height:14px;"><span style="letter-spacing:-0.063px">Flexible Car</span><span style="letter-spacing:0.85px">...</span></div>
<div class="a" style="left:422.5px;top:287px;line-height:14px;">Thu</div>
<div class="a" style="left:456.6px;top:287px;line-height:14px;">16/08/2018</div>
<div class="a" style="left:526.6px;top:287px;line-height:14px;">19:00</div>
<div class="a" style="left:567.5px;top:287px;line-height:14px;">Thu</div>
<div class="a" style="left:601.6px;top:287px;line-height:14px;">30/08/2018</div>
<div class="a" style="left:671.6px;top:287px;line-height:14px;">17:25</div>
<div class="a" style="left:710px;top:287px;width:21.4px;text-align:right;line-height:14px;">14</div>
<div class="a" style="left:736.6px;top:287px;line-height:14px;"><span style="letter-spacing:-0.064px">On Air</span><span style="letter-spacing:0.85px">...</span></div>
<div class="a" style="left:786.6px;top:287px;line-height:14px;"><span style="letter-spacing:-0.064px">On Air</span><span style="letter-spacing:0.85px">...</span></div>
<div class="a" style="left:835px;top:287px;width:52.1px;text-align:right;line-height:14px;">552.64</div>
<div class="a" style="left:890px;top:287px;width:62.1px;text-align:right;line-height:14px;">552.64</div>
<div class="a" style="left:956.6px;top:287px;line-height:14px;"><span style="letter-spacing:-0.376px">Alamo</span></div>
<div class="a" style="left:1031.6px;top:287px;line-height:14px;">yes</div>
<div class="a" style="left:1056.6px;top:287px;line-height:14px;">auto</div>
<div class="a" style="left:0px;top:301px;width:1085px;height:14px;background:#b5dfff;"></div>
<div class="a" style="left:0px;top:315px;width:1352px;height:1px;background:#d6d3ce;"></div>
<div class="a" style="left:2.5px;top:302px;line-height:14px;"><span style="letter-spacing:-0.219px">Ford Escape Or simila</span><span style="letter-spacing:0.85px">...</span></div>
<div class="a" style="left:120px;top:302px;width:21.4px;text-align:right;line-height:14px;">5</div>
<div class="a" style="left:146.6px;top:302px;line-height:14px;"><span style="letter-spacing:-0.127px">SUV(Intermediate) - Inclusive - Plus E</span><span style="letter-spacing:0.85px">...</span></div>
<div class="a" style="left:346.6px;top:302px;line-height:14px;"><span style="letter-spacing:-0.063px">Flexible Car</span><span style="letter-spacing:0.85px">...</span></div>
<div class="a" style="left:422.5px;top:302px;line-height:14px;">Thu</div>
<div class="a" style="left:456.6px;top:302px;line-height:14px;">16/08/2018</div>
<div class="a" style="left:526.6px;top:302px;line-height:14px;">19:00</div>
<div class="a" style="left:567.5px;top:302px;line-height:14px;">Thu</div>
<div class="a" style="left:601.6px;top:302px;line-height:14px;">30/08/2018</div>
<div class="a" style="left:671.6px;top:302px;line-height:14px;">17:25</div>
<div class="a" style="left:710px;top:302px;width:21.4px;text-align:right;line-height:14px;">14</div>
<div class="a" style="left:736.6px;top:302px;line-height:14px;"><span style="letter-spacing:-0.064px">On Air</span><span style="letter-spacing:0.85px">...</span></div>
<div class="a" style="left:786.6px;top:302px;line-height:14px;"><span style="letter-spacing:-0.064px">On Air</span><span style="letter-spacing:0.85px">...</span></div>
<div class="a" style="left:835px;top:302px;width:52.1px;text-align:right;line-height:14px;">555.63</div>
<div class="a" style="left:890px;top:302px;width:62.1px;text-align:right;line-height:14px;">555.63</div>
<div class="a" style="left:956.6px;top:302px;line-height:14px;"><span style="letter-spacing:-0.376px">Alamo</span></div>
<div class="a" style="left:1031.6px;top:302px;line-height:14px;">yes</div>
<div class="a" style="left:1056.6px;top:302px;line-height:14px;">auto</div>
<div class="a" style="left:0px;top:316px;width:1085px;height:14px;background:#b5dfff;"></div>
<div class="a" style="left:0px;top:330px;width:1352px;height:1px;background:#d6d3ce;"></div>
<div class="a" style="left:2.5px;top:317px;line-height:14px;"><span style="letter-spacing:-0.219px">Ford Escape Or simila</span><span style="letter-spacing:0.85px">...</span></div>
<div class="a" style="left:120px;top:317px;width:21.4px;text-align:right;line-height:14px;">5</div>
<div class="a" style="left:146.6px;top:317px;line-height:14px;"><span style="letter-spacing:-0.127px">SUV(Intermediate) - Inclusive - Plus E</span><span style="letter-spacing:0.85px">...</span></div>
<div class="a" style="left:346.6px;top:317px;line-height:14px;"><span style="letter-spacing:-0.063px">Flexible Car</span><span style="letter-spacing:0.85px">...</span></div>
<div class="a" style="left:422.5px;top:317px;line-height:14px;">Thu</div>
<div class="a" style="left:456.6px;top:317px;line-height:14px;">16/08/2018</div>
<div class="a" style="left:526.6px;top:317px;line-height:14px;">19:00</div>
<div class="a" style="left:567.5px;top:317px;line-height:14px;">Thu</div>
<div class="a" style="left:601.6px;top:317px;line-height:14px;">30/08/2018</div>
<div class="a" style="left:671.6px;top:317px;line-height:14px;">17:25</div>
<div class="a" style="left:710px;top:317px;width:21.4px;text-align:right;line-height:14px;">14</div>
<div class="a" style="left:736.6px;top:317px;line-height:14px;"><span style="letter-spacing:-0.064px">On Air</span><span style="letter-spacing:0.85px">...</span></div>
<div class="a" style="left:786.6px;top:317px;line-height:14px;"><span style="letter-spacing:-0.064px">On Air</span><span style="letter-spacing:0.85px">...</span></div>
<div class="a" style="left:835px;top:317px;width:52.1px;text-align:right;line-height:14px;">555.63</div>
<div class="a" style="left:890px;top:317px;width:62.1px;text-align:right;line-height:14px;">555.63</div>
<div class="a" style="left:956.6px;top:317px;line-height:14px;"><span style="letter-spacing:-0.376px">Alamo</span></div>
<div class="a" style="left:1031.6px;top:317px;line-height:14px;">yes</div>
<div class="a" style="left:1056.6px;top:317px;line-height:14px;">auto</div>
<div class="a" style="left:0px;top:331px;width:1085px;height:14px;background:#b5dfff;"></div>
<div class="a" style="left:0px;top:345px;width:1352px;height:1px;background:#d6d3ce;"></div>
<div class="a" style="left:2.5px;top:332px;line-height:14px;"><span style="letter-spacing:-0.219px">Ford Escape Or simila</span><span style="letter-spacing:0.85px">...</span></div>
<div class="a" style="left:120px;top:332px;width:21.4px;text-align:right;line-height:14px;">5</div>
<div class="a" style="left:146.6px;top:332px;line-height:14px;"><span style="letter-spacing:-0.128px">SUV(Intermediate) - Gold</span></div>
<div class="a" style="left:346.6px;top:332px;line-height:14px;"><span style="letter-spacing:-0.063px">Flexible Car</span><span style="letter-spacing:0.85px">...</span></div>
<div class="a" style="left:422.5px;top:332px;line-height:14px;">Thu</div>
<div class="a" style="left:456.6px;top:332px;line-height:14px;">16/08/2018</div>
<div class="a" style="left:526.6px;top:332px;line-height:14px;">19:00</div>
<div class="a" style="left:567.5px;top:332px;line-height:14px;">Thu</div>
<div class="a" style="left:601.6px;top:332px;line-height:14px;">30/08/2018</div>
<div class="a" style="left:671.6px;top:332px;line-height:14px;">17:25</div>
<div class="a" style="left:710px;top:332px;width:21.4px;text-align:right;line-height:14px;">14</div>
<div class="a" style="left:736.6px;top:332px;line-height:14px;"><span style="letter-spacing:-0.064px">On Air</span><span style="letter-spacing:0.85px">...</span></div>
<div class="a" style="left:786.6px;top:332px;line-height:14px;"><span style="letter-spacing:-0.064px">On Air</span><span style="letter-spacing:0.85px">...</span></div>
<div class="a" style="left:835px;top:332px;width:52.1px;text-align:right;line-height:14px;">561.32</div>
<div class="a" style="left:890px;top:332px;width:62.1px;text-align:right;line-height:14px;">561.32</div>
<div class="a" style="left:956.6px;top:332px;line-height:14px;"><span style="letter-spacing:-0.376px">Alamo</span></div>
<div class="a" style="left:1031.6px;top:332px;line-height:14px;">yes</div>
<div class="a" style="left:1056.6px;top:332px;line-height:14px;">auto</div>
<div class="a" style="left:0px;top:346px;width:1085px;height:14px;background:#b5dfff;"></div>
<div class="a" style="left:0px;top:360px;width:1352px;height:1px;background:#d6d3ce;"></div>
<div class="a" style="left:2.5px;top:347px;line-height:14px;"><span style="letter-spacing:-0.219px">Ford Escape Or simila</span><span style="letter-spacing:0.85px">...</span></div>
<div class="a" style="left:120px;top:347px;width:21.4px;text-align:right;line-height:14px;">5</div>
<div class="a" style="left:146.6px;top:347px;line-height:14px;"><span style="letter-spacing:-0.128px">SUV(Intermediate) - Gold</span></div>
<div class="a" style="left:346.6px;top:347px;line-height:14px;"><span style="letter-spacing:-0.063px">Flexible Car</span><span style="letter-spacing:0.85px">...</span></div>
<div class="a" style="left:422.5px;top:347px;line-height:14px;">Thu</div>
<div class="a" style="left:456.6px;top:347px;line-height:14px;">16/08/2018</div>
<div class="a" style="left:526.6px;top:347px;line-height:14px;">19:00</div>
<div class="a" style="left:567.5px;top:347px;line-height:14px;">Thu</div>
<div class="a" style="left:601.6px;top:347px;line-height:14px;">30/08/2018</div>
<div class="a" style="left:671.6px;top:347px;line-height:14px;">17:25</div>
<div class="a" style="left:710px;top:347px;width:21.4px;text-align:right;line-height:14px;">14</div>
<div class="a" style="left:736.6px;top:347px;line-height:14px;"><span style="letter-spacing:-0.064px">On Air</span><span style="letter-spacing:0.85px">...</span></div>
<div class="a" style="left:786.6px;top:347px;line-height:14px;"><span style="letter-spacing:-0.064px">On Air</span><span style="letter-spacing:0.85px">...</span></div>
<div class="a" style="left:835px;top:347px;width:52.1px;text-align:right;line-height:14px;">561.32</div>
<div class="a" style="left:890px;top:347px;width:62.1px;text-align:right;line-height:14px;">561.32</div>
<div class="a" style="left:956.6px;top:347px;line-height:14px;"><span style="letter-spacing:-0.376px">Alamo</span></div>
<div class="a" style="left:1031.6px;top:347px;line-height:14px;">yes</div>
<div class="a" style="left:1056.6px;top:347px;line-height:14px;">auto</div>
<div class="a" style="left:0px;top:361px;width:1085px;height:14px;background:#b5dfff;"></div>
<div class="a" style="left:0px;top:375px;width:1352px;height:1px;background:#d6d3ce;"></div>
<div class="a" style="left:2.5px;top:362px;line-height:14px;"><span style="letter-spacing:-0.043px">Toyota Corolla Or si</span><span style="letter-spacing:0.85px">...</span></div>
<div class="a" style="left:120px;top:362px;width:21.4px;text-align:right;line-height:14px;">5</div>
<div class="a" style="left:146.6px;top:362px;line-height:14px;"><span style="letter-spacing:-0.117px">Intermediate - Inclusive GPS</span></div>
<div class="a" style="left:346.6px;top:362px;line-height:14px;"><span style="letter-spacing:-0.063px">Flexible Car</span><span style="letter-spacing:0.85px">...</span></div>
<div class="a" style="left:422.5px;top:362px;line-height:14px;">Thu</div>
<div class="a" style="left:456.6px;top:362px;line-height:14px;">16/08/2018</div>
<div class="a" style="left:526.6px;top:362px;line-height:14px;">19:00</div>
<div class="a" style="left:567.5px;top:362px;line-height:14px;">Thu</div>
<div class="a" style="left:601.6px;top:362px;line-height:14px;">30/08/2018</div>
<div class="a" style="left:671.6px;top:362px;line-height:14px;">17:25</div>
<div class="a" style="left:710px;top:362px;width:21.4px;text-align:right;line-height:14px;">14</div>
<div class="a" style="left:736.6px;top:362px;line-height:14px;"><span style="letter-spacing:-0.064px">On Air</span><span style="letter-spacing:0.85px">...</span></div>
<div class="a" style="left:786.6px;top:362px;line-height:14px;"><span style="letter-spacing:-0.064px">On Air</span><span style="letter-spacing:0.85px">...</span></div>
<div class="a" style="left:835px;top:362px;width:52.1px;text-align:right;line-height:14px;">562.12</div>
<div class="a" style="left:890px;top:362px;width:62.1px;text-align:right;line-height:14px;">562.12</div>
<div class="a" style="left:956.6px;top:362px;line-height:14px;"><span style="letter-spacing:-0.376px">Alamo</span></div>
<div class="a" style="left:1031.6px;top:362px;line-height:14px;">yes</div>
<div class="a" style="left:1056.6px;top:362px;line-height:14px;">auto</div>
<div class="a" style="left:119px;top:16px;width:1px;height:351px;background:#d6d3ce;"></div>
<div class="a" style="left:144px;top:16px;width:1px;height:351px;background:#d6d3ce;"></div>
<div class="a" style="left:344px;top:16px;width:1px;height:351px;background:#d6d3ce;"></div>
<div class="a" style="left:419px;top:16px;width:1px;height:351px;background:#d6d3ce;"></div>
<div class="a" style="left:454px;top:16px;width:1px;height:351px;background:#d6d3ce;"></div>
<div class="a" style="left:524px;top:16px;width:1px;height:351px;background:#d6d3ce;"></div>
<div class="a" style="left:564px;top:16px;width:1px;height:351px;background:#d6d3ce;"></div>
<div class="a" style="left:599px;top:16px;width:1px;height:351px;background:#d6d3ce;"></div>
<div class="a" style="left:669px;top:16px;width:1px;height:351px;background:#d6d3ce;"></div>
<div class="a" style="left:709px;top:16px;width:1px;height:351px;background:#d6d3ce;"></div>
<div class="a" style="left:734px;top:16px;width:1px;height:351px;background:#d6d3ce;"></div>
<div class="a" style="left:784px;top:16px;width:1px;height:351px;background:#d6d3ce;"></div>
<div class="a" style="left:834px;top:16px;width:1px;height:351px;background:#d6d3ce;"></div>
<div class="a" style="left:889px;top:16px;width:1px;height:351px;background:#d6d3ce;"></div>
<div class="a" style="left:954px;top:16px;width:1px;height:351px;background:#d6d3ce;"></div>
<div class="a" style="left:1029px;top:16px;width:1px;height:351px;background:#d6d3ce;"></div>
<div class="a" style="left:1054px;top:16px;width:1px;height:351px;background:#d6d3ce;"></div>
<div class="a" style="left:1084px;top:16px;width:1px;height:351px;background:#d6d3ce;"></div>
</div>
<div class="a" style="left:1567px;top:368px;width:16px;height:384px;background:conic-gradient(#fff 25%,#d6d3ce 0 50%,#fff 0 75%,#d6d3ce 0) 0 0/2px 2px;"></div>
<div class="a" style="left:1567px;top:368px;width:16px;height:16px;background:#d6d3ce;box-shadow:inset 1px 1px 0 #d6d3ce,inset -1px -1px 0 #424142,inset 2px 2px 0 #fff,inset -2px -2px 0 #848284;"></div>
<div class="a" style="left:1567px;top:736px;width:16px;height:16px;background:#d6d3ce;box-shadow:inset 1px 1px 0 #d6d3ce,inset -1px -1px 0 #424142,inset 2px 2px 0 #fff,inset -2px -2px 0 #848284;"></div>
<svg class="a" style="left:1571px;top:374px" width="7" height="4"><path d="M0 4h7l-3.5 -3.5z" fill="#000"/></svg>
<svg class="a" style="left:1571px;top:742px" width="7" height="4"><path d="M0 0h7l-3.5 3.5z" fill="#000"/></svg>
<div class="a" style="left:1567px;top:384px;width:16px;height:144px;background:#d6d3ce;box-shadow:inset 1px 1px 0 #d6d3ce,inset -1px -1px 0 #424142,inset 2px 2px 0 #fff,inset -2px -2px 0 #848284;"></div>
<div class="a" style="left:215.5px;top:779px;line-height:14px;height:14px;letter-spacing:-0.062px;">First portion: 11.1 sec, total search time: 11.4 sec</div>
<div class="a" style="left:1554px;top:774px;width:23px;height:22px;background:#d6d3ce;box-shadow:inset 1px 1px 0 #fff,inset -1px -1px 0 #424142,inset -2px -2px 0 #848284;"></div>
<div class="a" style="left:1554px;top:775.5px;line-height:20px;height:20px;width:23px;text-align:center;color:#0a4a9c;font-family:Liberation Serif,serif;font-weight:bold;font-size:16px;">i</div>
<div class="a" style="left:209px;top:801px;width:1378px;height:1px;background:#848284;"></div>
<div class="a" style="left:209px;top:802px;width:53px;height:17px;border-right:1px solid #848284;"></div>
<div class="a" style="left:212.3px;top:804px;line-height:14px;height:14px;letter-spacing:-0.433px;">Summary</div>
<div class="a" style="left:262px;top:802px;width:41px;height:17px;border-right:1px solid #848284;"></div>
<div class="a" style="left:264.1px;top:804px;line-height:14px;height:14px;letter-spacing:0.069px;">Search</div>
<div class="a" style="left:303px;top:802px;width:84px;height:17px;border-right:1px solid #848284;background:#c6ffc6;"></div>
<div class="a" style="left:305.6px;top:804px;line-height:14px;height:14px;letter-spacing:0.046px;">Acc 2A,2C MCO</div>
<div class="a" style="left:387px;top:802px;width:63px;height:17px;border-right:1px solid #848284;background:#c6ffc6;"></div>
<div class="a" style="left:389.7px;top:804px;line-height:14px;height:14px;letter-spacing:0.257px;">Tour 2A,2C</div>
<div class="a" style="left:450px;top:802px;width:125px;height:17px;background:#c6c3ff;"></div>
<div class="a" style="left:451.8px;top:804px;line-height:14px;height:14px;letter-spacing:0.030px;">Flt 2A,2C LON MCO LON</div>
<div class="a" style="left:575px;top:801px;width:49px;height:17px;background:#000084;border-radius:0 0 2px 2px;"></div>
<div class="a" style="left:575px;top:818px;width:49px;height:1px;background:#c6c3ff;"></div>
<div class="a" style="left:577.6px;top:804px;line-height:14px;height:14px;letter-spacing:0.052px;color:#fff;">Car MCO</div>
<div class="a" style="left:624px;top:802px;width:64px;height:17px;border-right:1px solid #848284;background:#c6c3ff;"></div>
<div class="a" style="left:628.8px;top:804px;line-height:14px;height:14px;letter-spacing:0.267px;">Tour 2A,2C</div>
<div class="a" style="left:688px;top:802px;width:96px;height:17px;border-right:1px solid #848284;"></div>
<div class="a" style="left:691.1px;top:804px;line-height:14px;height:14px;letter-spacing:-0.302px;">Financial Summary</div>
<div class="a" style="left:788.4px;top:828px;line-height:14px;height:14px;letter-spacing:0.058px;">User: 413 - Scott West</div>
<div class="a" style="left:909.4px;top:828px;line-height:14px;height:14px;letter-spacing:-0.076px;">Retailer: 'Ocean-Florida'</div>
<div class="a" style="left:1036px;top:828px;line-height:14px;height:14px;letter-spacing:-0.052px;">Client: none</div>
<div class="a" style="left:1533.6px;top:828px;line-height:14px;height:14px;letter-spacing:-0.147px;">10:32 GMT</div>
<div class="a" style="left:0px;top:854px;width:1593px;height:1px;background:#848284;"></div>
<div class="a" style="left:0px;top:855px;width:1593px;height:1px;background:#424142;"></div>
<div class="a" style="left:0px;top:856px;width:1593px;height:39px;background:#d6d3ce;"></div>
<div class="a" style="left:-2px;top:856px;width:50px;height:38px;background:#d6d3ce;box-shadow:inset 1px 1px 0 #fff,inset -1px -1px 0 #424142,inset -2px -2px 0 #848284;"></div>
<svg class="a" style="left:-1px;top:867px" width="14" height="16"><path d="M0 3 C3 1.5 5 2 6.5 3 L5.5 8 C4 7 2 6.8 0 8z" fill="#e84818"/><path d="M7.5 3.5 C9.5 5 11.5 5 13.5 3.5 L12.5 9 C10.5 10 8.5 10 6.5 8.5z" fill="#58b030"/><path d="M0 9 C2 8 4 8 5.3 9 L4.3 14 C3 13 1.5 13 0 13.5z" fill="#3878e0"/><path d="M6.3 9.5 C8 11 10.5 11 12.3 10 L11.3 15 C9.5 16 7 16 5.3 14.5z" fill="#f8c020"/></svg>
<div class="a" style="left:14.7px;top:869px;line-height:14px;height:14px;font-weight:bold;letter-spacing:0.269px;">Start</div>
<div class="a" style="left:15px;top:859px;width:30px;height:32px;border:1px dotted #000;"></div>
<div class="a" style="left:57px;top:856px;width:160px;height:38px;background:#fff;box-shadow:inset 1px 1px 0 #424142,inset -1px -1px 0 #fff,inset 2px 2px 0 #848284,inset -2px -2px 0 #d6d3ce;"></div>
<svg class="a" style="left:62px;top:864px" width="30" height="22"><defs><radialGradient id="gA" cx="9" cy="5.5" r="20" gradientUnits="userSpaceOnUse"><stop offset="0" stop-color="#fff070"/><stop offset="0.3" stop-color="#f8b020"/><stop offset="0.6" stop-color="#e07010"/><stop offset="1" stop-color="#b03c08"/></radialGradient></defs><path d="M1 8.5 C0.5 3 4 1 9 1 L22 3 C26 3.2 29.5 5 29 7.5 C28.8 9 27 10 26 11 L18 20 C16.5 22 14.5 22 13 20 L2.5 10.5z" fill="url(#gA)"/></svg>
<div class="a" style="left:96px;top:869px;line-height:14px;height:14px;font-weight:bold;letter-spacing:0.113px;">Interactive - Ocea...</div>
<div class="a" style="left:1402px;top:856px;width:190px;height:37px;box-shadow:inset 1px 1px 0 #848284,inset -1px -1px 0 #fff;"></div>
<svg class="a" style="left:1409px;top:867px" width="16" height="16"><path d="M1 1.5 L7 0.5 L8.5 7.5 L0.5 8.5z" fill="#f8a818"/><path d="M1 1.5 L4 1 L5 5 L0.8 5.5z" fill="#f86818"/><path d="M7 0.5 L15.5 1.5 L15.5 6.5 L8.5 7.5z" fill="#2888d8"/><path d="M0.5 8.5 L8.5 7.5 L9 15.5 L0.5 15z" fill="#48a838"/><path d="M8.5 7.5 L15.5 6.5 L15.5 15.5 L9 15.5z" fill="#e83820"/><path d="M8.5 7.5 L13 7 L15.5 12 L15.5 15.5 L12 15.5z" fill="#f86020" opacity="0.6"/></svg><svg class="a" style="left:1432px;top:870px" width="18" height="10"><path d="M1 1.5 L12.5 0.8 L12.5 6.8 L2.5 6.8z" fill="#58c838" stroke="#208018" stroke-width="0.8"/><rect x="10" y="2" width="2.5" height="2.5" fill="#182018"/><path d="M4 7v1.8 M6 7v1.8 M8 7v1.8 M10 7v1.8" stroke="#d8c010" stroke-width="1.1"/><path d="M14 0.3v8 M14 0.8h2.6 M14 3.8h1.8" stroke="#181818" stroke-width="1.3" fill="none"/></svg><svg class="a" style="left:1457px;top:867px" width="17" height="17"><rect x="4.5" y="3" width="11.5" height="10" fill="#f4f4f4" stroke="#909090"/><rect x="6" y="4.5" width="8.5" height="7" fill="#b4b4b4"/><path d="M5.5 15.2h10" stroke="#f8f8f8" stroke-width="1.6"/><path d="M5 16.3h11" stroke="#909090" stroke-width="0.8"/><path d="M1 0.8v4.2h4.6v-4.2 M3.3 0.5v3" stroke="#787878" stroke-width="1" fill="#fff"/><path d="M3.3 5 V15.5" stroke="#787878" stroke-width="2.4"/><path d="M3.3 5 V15.5" stroke="#fff" stroke-width="1"/></svg><svg class="a" style="left:1481px;top:867px" width="17" height="17"><path d="M1 5.5h2.5l4-4v13l-4-4H1z" fill="#f0f0f0" stroke="#888" stroke-width="0.9"/><circle cx="11.4" cy="10.9" r="4.4" fill="#e81818"/><path d="M9.4 8.9l4 4 M13.4 8.9l-4 4" stroke="#fff" stroke-width="1.5"/></svg><svg class="a" style="left:1575px;top:869px" width="15" height="13"><rect x="0" y="0" width="15" height="13" fill="#a8c4ec"/><rect x="1" y="1" width="13" height="11" fill="#2860c8"/><path d="M1 1h13v5l-13 3z" fill="#4088e0"/><rect x="1" y="9" width="13" height="3" fill="#182840"/><rect x="2" y="8.5" width="2.2" height="2.2" fill="#f0a020"/><rect x="3" y="9.5" width="1.2" height="1.2" fill="#40a0f0"/></svg>
<div class="a" style="left:1524.8px;top:861px;line-height:14px;height:14px;letter-spacing:-0.023px;">10:32</div>
<div class="a" style="left:1510.6px;top:877px;line-height:14px;height:14px;letter-spacing:-0.043px;">19/01/2017</div>
</body></html>
